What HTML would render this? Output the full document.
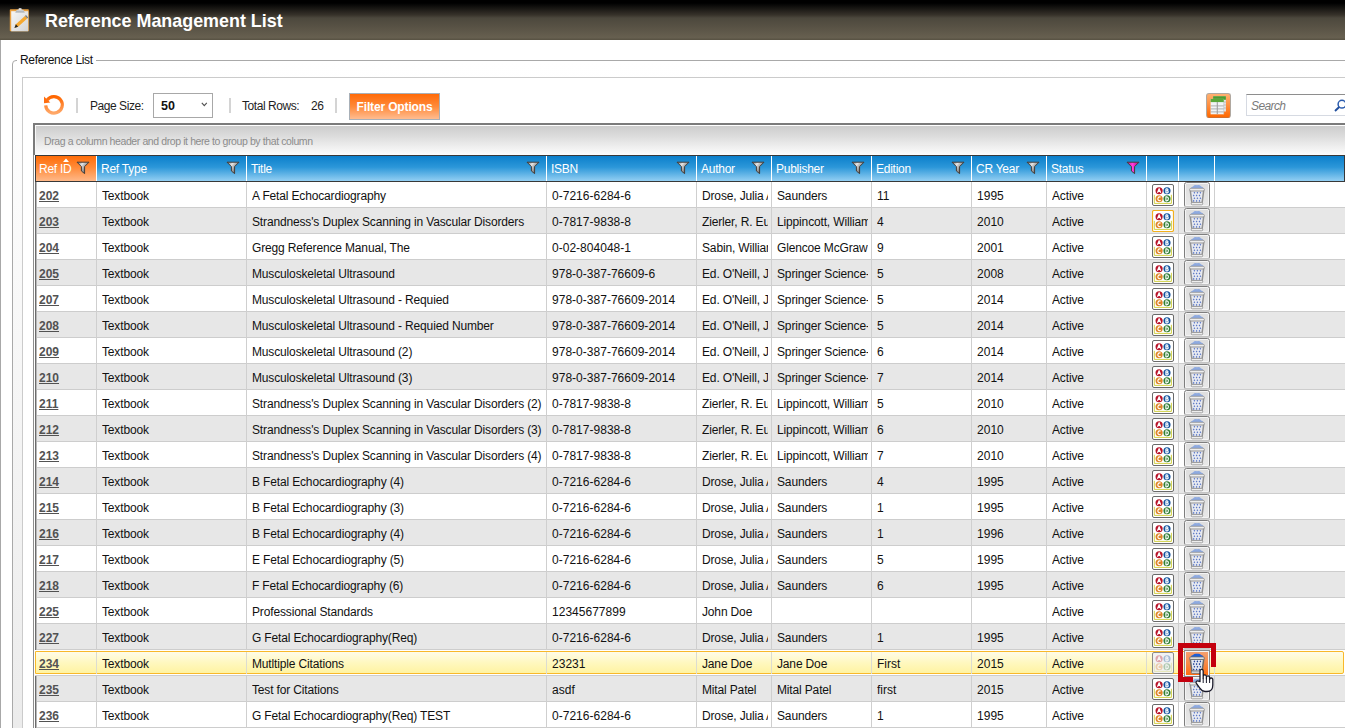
<!DOCTYPE html>
<html><head><meta charset="utf-8"><title>Reference Management List</title>
<style>
*{box-sizing:border-box}
html,body{margin:0;padding:0;width:1345px;height:728px;overflow:hidden;background:#fff;font-family:"Liberation Sans",sans-serif;position:relative}
.abs{position:absolute}
#topbar{position:absolute;left:0;top:0;width:1345px;height:40px;background:linear-gradient(to bottom,#000 0px,#000 3px,#1b1915 9px,#37322a 15px,#4c483d 18px,#575144 26px,#676050 38px,#5a5445 39px,#5a5445 40px)}
#title{position:absolute;left:45px;top:10px;font-size:17.9px;line-height:22px;font-weight:bold;color:#fff;white-space:nowrap}
#fs{position:absolute;left:12px;top:60px;width:1400px;height:800px;border:1px solid #a9a9a9;border-radius:4px;background:linear-gradient(to bottom,#ffffff 0%,#e8e8e8 100%)}
#legend{position:absolute;left:17px;top:53px;padding:0 3px;background:#fff;font-size:12px;line-height:14px;color:#111;letter-spacing:-0.33px;white-space:nowrap}
#inner{position:absolute;left:22px;top:77px;width:1400px;height:800px;border:1px solid #cbcbcb;background:#fff}
.txt{position:absolute;white-space:nowrap;font-size:12px;line-height:14px;color:#1e1e1e;letter-spacing:-0.45px}
.tsep{position:absolute;width:2px;height:15px;background:#d4d4d4}
#dd{position:absolute;left:153px;top:93px;width:60px;height:25px;border:1px solid #a8a8a8;background:#fff}
#ddv{position:absolute;left:7px;top:5px;font-size:12.5px;line-height:14px;font-weight:bold;color:#111}
#fbtn{position:absolute;left:349px;top:93px;width:91px;height:27px;border:1px solid #a8b0b8;background:linear-gradient(to bottom,#ff6a08 0%,#ff8a3a 50%,#ffbc90 100%);color:#fff;font-weight:bold;font-size:12px;line-height:27px;text-align:center;letter-spacing:-0.15px;white-space:nowrap}
#xbtn{position:absolute;left:1206px;top:93px;width:25px;height:25px;border-radius:3px;border:1px solid #b0a8a0;border-bottom-color:#d07030;background:linear-gradient(to bottom,#ffb070 0%,#ff8a38 55%,#ff6800 100%)}
#search{position:absolute;left:1246px;top:94px;width:120px;height:22px;border:1px solid #d6dae2;border-top-color:#8e8e8e;border-right:none;background:#fff}
#sph{position:absolute;left:4px;top:4px;font-size:12px;line-height:14px;font-style:italic;color:#7a7a7a;letter-spacing:-0.6px}
#grid{position:absolute;left:33px;top:123px;width:1400px;height:2px;background:#7b7b7b}
#gl1{position:absolute;left:33px;top:123px;width:2px;height:32px;background:#7b7b7b}
#gl2{position:absolute;left:33px;top:155px;width:1px;height:573px;background:#8e8e8e}
#grp{position:absolute;left:35px;top:125px;width:1310px;height:30px;background:linear-gradient(to bottom,#cdcdcd 0%,#dcdcdc 35%,#f3f3f3 80%,#fcfcfc 100%);border-top:1px solid #fff;border-left:1px solid #f8f8f8}
#grptx{position:absolute;left:8px;top:9px;font-size:10.5px;line-height:12px;color:#8c8c8c;letter-spacing:-0.4px;white-space:nowrap}
#hdr{position:absolute;left:35px;top:155px;width:1310px;height:27px;border-left:1px solid #3c3c3c;border-top:1px solid #383838;border-bottom:1px solid #383838;border-right:1px solid #383838;background:linear-gradient(to bottom,#0b7fcb 0%,#2c97d9 45%,#93cff3 100%)}
#hdr0{position:absolute;left:36px;top:156px;width:60px;height:25px;background:linear-gradient(to bottom,#ff6c08 0%,#ff8a38 45%,#ffb888 100%)}
.hsep{position:absolute;top:156px;width:1px;height:25px;background:#fff}
.htx{position:absolute;top:156px;height:25px;line-height:27px;font-size:12px;color:#fff;white-space:nowrap;letter-spacing:-0.25px}
.row{position:absolute;left:35px;width:1310px;height:26px;border-bottom:1px solid #cdcdcd;background:#fff}
.row.alt{background:#e7e7e7}
#hover{position:absolute;left:35px;width:1310px;height:26px;border-bottom:1px solid #cdcdcd;background:#fff}
#hover:after{content:"";position:absolute;left:0px;right:1px;top:1px;bottom:1px;border:1px solid #f8b82a;border-radius:0 2px 2px 0;background:linear-gradient(to bottom,#fffce8 0%,#fff8c0 50%,#fff3a2 100%)}
.vs{position:absolute;width:1px;background:#cfcfcf}
.vs2{position:absolute;width:1px;background:#dcdcd0}
.cell{position:absolute;height:25px;line-height:29px;font-size:12px;color:#111;white-space:nowrap;overflow:hidden;letter-spacing:-0.15px}
.rid{font-weight:bold;color:#525252;text-decoration:underline;letter-spacing:0}

.num{letter-spacing:0.02px}

</style></head><body>
<div id="topbar"></div>
<svg class="abs" style="left:9px;top:7px" width="22" height="26" viewBox="0 0 22 26">
<defs><linearGradient id="cbg" x1="0" y1="0" x2="1" y2="1"><stop offset="0" stop-color="#f6f6f6"/><stop offset="1" stop-color="#d4d4d4"/></linearGradient>
<linearGradient id="clp" x1="0" y1="0" x2="0" y2="1"><stop offset="0" stop-color="#ffffff"/><stop offset="1" stop-color="#9aa0a8"/></linearGradient></defs>
<rect x="0.8" y="2.3" width="19" height="22" rx="0.8" fill="#e8a040"/>
<rect x="2.2" y="4.2" width="17" height="20.1" fill="url(#cbg)"/>
<path d="M6.2 5.6 L7.8 2.8 L9.5 2.8 L9.8 1.2 L12.4 1.2 L12.7 2.8 L14.3 2.8 L15.8 5.6 Z" fill="url(#clp)"/>
<path d="M18.24 11.46 L15.96 8.94 L6.86 17.24 L5.6 20.7 L9.14 19.76 Z" fill="#f5a830"/>
<path d="M18.24 11.46 L15.96 8.94 L17 8 L19.2 10.5 Z" fill="#7a7a7a"/>
<path d="M6.86 17.24 L5.4 20.9 L9.14 19.76 Z" fill="#222"/>
</svg>
<div id="title">Reference Management List</div>
<div class="abs" style="left:0;top:40px;width:1px;height:688px;background:#a8a8a8"></div>
<div id="fs"></div><div id="legend">Reference List</div>
<div id="inner"></div>
<svg class="abs" style="left:43px;top:94px" width="22" height="22" viewBox="0 0 22 22">
<defs><linearGradient id="rfg" x1="0" y1="0" x2="0" y2="1"><stop offset="0" stop-color="#ff6600"/><stop offset="1" stop-color="#ffa868"/></linearGradient></defs>
<path d="M2.7 11.3 A8.3 8.3 0 1 0 4.1 6.2" fill="none" stroke="url(#rfg)" stroke-width="3.2"/>
<path d="M1 2.6 L1 9.3 L7.3 8.5 Z" fill="#ff6e10"/>
</svg>
<div class="tsep" style="left:76px;top:98px"></div>
<div class="txt" style="left:90px;top:99px">Page Size:</div>
<div id="dd"><span id="ddv">50</span><svg class="abs" style="left:47px;top:8px" width="7" height="5" viewBox="0 0 7 5"><path d="M0.8 0.8 L3.3 3.6 L5.8 0.8" fill="none" stroke="#505050" stroke-width="1.1"/></svg></div>
<div class="tsep" style="left:229px;top:98px"></div>
<div class="txt" style="left:242px;top:99px">Total Rows:</div>
<div class="txt" style="left:311px;top:99px">26</div>
<div class="tsep" style="left:335px;top:98px"></div>
<div id="fbtn">Filter Options</div>
<div id="xbtn"></div><svg class="abs" style="left:1206px;top:93px" width="25" height="25" viewBox="0 0 25 25">
<rect x="7.1" y="3.2" width="12.8" height="15.3" fill="#e4e8ec"/>
<rect x="7.1" y="3.2" width="12.8" height="3.6" fill="#4e9a30"/>
<path d="M7.1 9 H19.9 M7.1 12 H19.9 M7.1 15 H19.9" stroke="#b0b0b0" stroke-width="0.8"/>
<rect x="4.6" y="5.9" width="13.2" height="15.4" fill="#f2f4f6"/>
<rect x="4.6" y="5.9" width="13.2" height="3.2" fill="#5aa83a"/>
<path d="M4.6 12.9 H17.8 M4.6 15.9 H17.8 M4.6 18.9 H17.8" stroke="#a8a8a8" stroke-width="0.9"/>
<path d="M11.3 9.1 V21.3" stroke="#a0a0a0" stroke-width="1.1"/>
<path d="M17.8 9 V21.3" stroke="#b8b8b8" stroke-width="0.6"/>
</svg>
<div id="search"><span id="sph">Search</span><svg class="abs" style="left:86px;top:3px" width="14" height="14" viewBox="0 0 14 14"><circle cx="9" cy="6.2" r="3.9" fill="none" stroke="#2a5cae" stroke-width="1.5"/><path d="M6.2 9 L2 13" stroke="#22509e" stroke-width="1.9"/></svg></div>
<div id="grid"></div><div id="gl1"></div><div id="gl2"></div>
<div id="grp"><span id="grptx">Drag a column header and drop it here to group by that column</span></div>
<div class="row" style="top:182px"></div>
<div class="row alt" style="top:208px"></div>
<div class="row" style="top:234px"></div>
<div class="row alt" style="top:260px"></div>
<div class="row" style="top:286px"></div>
<div class="row alt" style="top:312px"></div>
<div class="row" style="top:338px"></div>
<div class="row alt" style="top:364px"></div>
<div class="row" style="top:390px"></div>
<div class="row alt" style="top:416px"></div>
<div class="row" style="top:442px"></div>
<div class="row alt" style="top:468px"></div>
<div class="row" style="top:494px"></div>
<div class="row alt" style="top:520px"></div>
<div class="row" style="top:546px"></div>
<div class="row alt" style="top:572px"></div>
<div class="row" style="top:598px"></div>
<div class="row alt" style="top:624px"></div>
<div class="row" style="top:650px"></div>
<div class="row alt" style="top:676px"></div>
<div class="row" style="top:702px"></div>
<div class="vs" style="left:96px;top:182px;height:546px"></div>
<div class="vs" style="left:246px;top:182px;height:546px"></div>
<div class="vs" style="left:546px;top:182px;height:546px"></div>
<div class="vs" style="left:696px;top:182px;height:546px"></div>
<div class="vs" style="left:771px;top:182px;height:546px"></div>
<div class="vs" style="left:871px;top:182px;height:546px"></div>
<div class="vs" style="left:971px;top:182px;height:546px"></div>
<div class="vs" style="left:1046px;top:182px;height:546px"></div>
<div class="vs" style="left:1146px;top:182px;height:546px"></div>
<div class="vs" style="left:1178px;top:182px;height:546px"></div>
<div class="vs" style="left:1214px;top:182px;height:546px"></div>
<div class="abs" style="left:35px;top:182px;width:1px;height:546px;background:#6c6c6c"></div><div class="abs" style="left:36px;top:182px;width:1px;height:546px;background:#b8b8b8"></div>
<div id="hover" style="top:650px"></div>
<div class="vs2" style="left:96px;top:652px;height:22px"></div>
<div class="vs2" style="left:246px;top:652px;height:22px"></div>
<div class="vs2" style="left:546px;top:652px;height:22px"></div>
<div class="vs2" style="left:696px;top:652px;height:22px"></div>
<div class="vs2" style="left:771px;top:652px;height:22px"></div>
<div class="vs2" style="left:871px;top:652px;height:22px"></div>
<div class="vs2" style="left:971px;top:652px;height:22px"></div>
<div class="vs2" style="left:1046px;top:652px;height:22px"></div>
<div class="vs2" style="left:1146px;top:652px;height:22px"></div>
<div class="vs2" style="left:1178px;top:652px;height:22px"></div>
<div class="vs2" style="left:1214px;top:652px;height:22px"></div>
<svg width="0" height="0" style="position:absolute"><defs>
<linearGradient id="tbg" x1="0" y1="0" x2="0" y2="1"><stop offset="0" stop-color="#dedede"/><stop offset="1" stop-color="#e8e8e8"/></linearGradient>
<linearGradient id="tbo" x1="0" y1="0" x2="0" y2="1"><stop offset="0" stop-color="#f4a070"/><stop offset="0.5" stop-color="#f88a48"/><stop offset="1" stop-color="#ff6c10"/></linearGradient>
</defs></svg>
<div class="cell rid" style="left:39px;top:182px;width:54px">202</div>
<div class="cell" style="left:102px;top:182px;width:141px">Textbook</div>
<div class="cell" style="left:252px;top:182px;width:291px">A Fetal Echocardiography</div>
<div class="cell num" style="left:552px;top:182px;width:141px">0-7216-6284-6</div>
<div class="cell" style="left:702px;top:182px;width:66px">Drose, Julia A</div>
<div class="cell" style="left:777px;top:182px;width:91px">Saunders</div>
<div class="cell num" style="left:877px;top:182px;width:91px">11</div>
<div class="cell num" style="left:977px;top:182px;width:66px">1995</div>
<div class="cell" style="left:1052px;top:182px;width:91px">Active</div>
<svg class="abs" style="left:1152px;top:184px" width="22" height="22" viewBox="0 0 22 22">
<rect x="0.5" y="0.5" width="21" height="21" rx="1.5" fill="#fff" stroke="#6a6a6a" stroke-width="1"/><g>
<path d="M2.3 10.8 V19.4 H19.4 V10.8" fill="none" stroke="#cccc30" stroke-width="0.9"/>
<circle cx="7.1" cy="6.8" r="3.55" fill="#b8142a"/><circle cx="15" cy="6.8" r="3.55" fill="#12539e"/>
<circle cx="7.1" cy="14.8" r="3.55" fill="#de8426"/><circle cx="15" cy="14.8" r="3.55" fill="#2f7d32"/>
<g fill="none" stroke="#fff" stroke-width="1.15" stroke-linejoin="round"><path d="M5.5 8.8 L7.1 4.6 L8.7 8.8 M6.1 7.5 H8.1"/><path d="M13.9 4.8 V8.8 H15.2 A1.05 1.05 0 0 0 15.2 6.7 H13.9 M13.9 4.8 H15 A0.95 0.95 0 0 1 15 6.7"/>
<path d="M8.6 13.3 A1.7 1.9 0 1 0 8.6 16.3"/><path d="M13.9 12.8 V16.8 H14.7 A1.7 2 0 0 0 14.7 12.8 Z"/></g>
</g></svg>
<svg class="abs" style="left:1184px;top:182px" width="26" height="25" viewBox="0 0 26 25">
<rect x="0.5" y="0.5" width="25" height="24.5" rx="2" fill="#f4f4f4" stroke="#7e7e7e" stroke-width="1"/>
<path d="M0.5 24.5 H25.5" stroke="#c4c4c4" stroke-width="1"/>
<rect x="2" y="2" width="22" height="21" fill="url(#tbg)"/>
<path d="M6.6 7 Q6.8 4.4 9 4.4 Q10.6 2.6 13 3.2 Q15.6 2.6 17.2 4.4 Q19.4 4.4 19.6 7 Z" fill="#8eaae0"/><path d="M6.3 8.6 L19.7 8.6 L18.1 20.8 L7.9 20.8 Z" fill="#e8eaf0" stroke="#929292" stroke-width="1.5"/><rect x="5.6" y="6.3" width="14.8" height="2.6" rx="1.3" fill="#eeeeee" stroke="#929292" stroke-width="0.8"/><g fill="#5a78c8"><path d="M10.40 9.75 L11.25 10.80 L10.40 11.85 L9.55 10.80 Z"/><path d="M13.40 9.75 L14.25 10.80 L13.40 11.85 L12.55 10.80 Z"/><path d="M16.40 9.75 L17.25 10.80 L16.40 11.85 L15.55 10.80 Z"/><path d="M9.70 12.45 L10.55 13.50 L9.70 14.55 L8.85 13.50 Z"/><path d="M12.60 12.45 L13.45 13.50 L12.60 14.55 L11.75 13.50 Z"/><path d="M15.50 12.45 L16.35 13.50 L15.50 14.55 L14.65 13.50 Z"/><path d="M10.40 15.15 L11.25 16.20 L10.40 17.25 L9.55 16.20 Z"/><path d="M13.40 15.15 L14.25 16.20 L13.40 17.25 L12.55 16.20 Z"/><path d="M16.40 15.15 L17.25 16.20 L16.40 17.25 L15.55 16.20 Z"/><path d="M9.70 17.85 L10.55 18.90 L9.70 19.95 L8.85 18.90 Z"/><path d="M12.60 17.85 L13.45 18.90 L12.60 19.95 L11.75 18.90 Z"/><path d="M15.50 17.85 L16.35 18.90 L15.50 19.95 L14.65 18.90 Z"/></g><rect x="7.3" y="20.4" width="11.4" height="2.4" rx="1" fill="#eeeeee" stroke="#929292" stroke-width="0.8"/>
</svg>
<div class="cell rid" style="left:39px;top:208px;width:54px">203</div>
<div class="cell" style="left:102px;top:208px;width:141px">Textbook</div>
<div class="cell" style="left:252px;top:208px;width:291px">Strandness's Duplex Scanning in Vascular Disorders</div>
<div class="cell num" style="left:552px;top:208px;width:141px">0-7817-9838-8</div>
<div class="cell" style="left:702px;top:208px;width:66px">Zierler, R. Eugene</div>
<div class="cell" style="left:777px;top:208px;width:91px">Lippincott, William</div>
<div class="cell num" style="left:877px;top:208px;width:91px">4</div>
<div class="cell num" style="left:977px;top:208px;width:66px">2010</div>
<div class="cell" style="left:1052px;top:208px;width:91px">Active</div>
<svg class="abs" style="left:1152px;top:210px" width="22" height="22" viewBox="0 0 22 22">
<rect x="0.5" y="0.5" width="21" height="21" rx="1.5" fill="#fff" stroke="#f2b01e" stroke-width="1.2"/><g>
<path d="M2.3 10.8 V19.4 H19.4 V10.8" fill="none" stroke="#cccc30" stroke-width="0.9"/>
<circle cx="7.1" cy="6.8" r="3.55" fill="#b8142a"/><circle cx="15" cy="6.8" r="3.55" fill="#12539e"/>
<circle cx="7.1" cy="14.8" r="3.55" fill="#de8426"/><circle cx="15" cy="14.8" r="3.55" fill="#2f7d32"/>
<g fill="none" stroke="#fff" stroke-width="1.15" stroke-linejoin="round"><path d="M5.5 8.8 L7.1 4.6 L8.7 8.8 M6.1 7.5 H8.1"/><path d="M13.9 4.8 V8.8 H15.2 A1.05 1.05 0 0 0 15.2 6.7 H13.9 M13.9 4.8 H15 A0.95 0.95 0 0 1 15 6.7"/>
<path d="M8.6 13.3 A1.7 1.9 0 1 0 8.6 16.3"/><path d="M13.9 12.8 V16.8 H14.7 A1.7 2 0 0 0 14.7 12.8 Z"/></g>
</g></svg>
<svg class="abs" style="left:1184px;top:208px" width="26" height="25" viewBox="0 0 26 25">
<rect x="0.5" y="0.5" width="25" height="24.5" rx="2" fill="#f4f4f4" stroke="#7e7e7e" stroke-width="1"/>
<path d="M0.5 24.5 H25.5" stroke="#c4c4c4" stroke-width="1"/>
<rect x="2" y="2" width="22" height="21" fill="url(#tbg)"/>
<path d="M6.6 7 Q6.8 4.4 9 4.4 Q10.6 2.6 13 3.2 Q15.6 2.6 17.2 4.4 Q19.4 4.4 19.6 7 Z" fill="#8eaae0"/><path d="M6.3 8.6 L19.7 8.6 L18.1 20.8 L7.9 20.8 Z" fill="#e8eaf0" stroke="#929292" stroke-width="1.5"/><rect x="5.6" y="6.3" width="14.8" height="2.6" rx="1.3" fill="#eeeeee" stroke="#929292" stroke-width="0.8"/><g fill="#5a78c8"><path d="M10.40 9.75 L11.25 10.80 L10.40 11.85 L9.55 10.80 Z"/><path d="M13.40 9.75 L14.25 10.80 L13.40 11.85 L12.55 10.80 Z"/><path d="M16.40 9.75 L17.25 10.80 L16.40 11.85 L15.55 10.80 Z"/><path d="M9.70 12.45 L10.55 13.50 L9.70 14.55 L8.85 13.50 Z"/><path d="M12.60 12.45 L13.45 13.50 L12.60 14.55 L11.75 13.50 Z"/><path d="M15.50 12.45 L16.35 13.50 L15.50 14.55 L14.65 13.50 Z"/><path d="M10.40 15.15 L11.25 16.20 L10.40 17.25 L9.55 16.20 Z"/><path d="M13.40 15.15 L14.25 16.20 L13.40 17.25 L12.55 16.20 Z"/><path d="M16.40 15.15 L17.25 16.20 L16.40 17.25 L15.55 16.20 Z"/><path d="M9.70 17.85 L10.55 18.90 L9.70 19.95 L8.85 18.90 Z"/><path d="M12.60 17.85 L13.45 18.90 L12.60 19.95 L11.75 18.90 Z"/><path d="M15.50 17.85 L16.35 18.90 L15.50 19.95 L14.65 18.90 Z"/></g><rect x="7.3" y="20.4" width="11.4" height="2.4" rx="1" fill="#eeeeee" stroke="#929292" stroke-width="0.8"/>
</svg>
<div class="cell rid" style="left:39px;top:234px;width:54px">204</div>
<div class="cell" style="left:102px;top:234px;width:141px">Textbook</div>
<div class="cell" style="left:252px;top:234px;width:291px">Gregg Reference Manual, The</div>
<div class="cell num" style="left:552px;top:234px;width:141px">0-02-804048-1</div>
<div class="cell" style="left:702px;top:234px;width:66px">Sabin, William</div>
<div class="cell" style="left:777px;top:234px;width:91px">Glencoe McGraw</div>
<div class="cell num" style="left:877px;top:234px;width:91px">9</div>
<div class="cell num" style="left:977px;top:234px;width:66px">2001</div>
<div class="cell" style="left:1052px;top:234px;width:91px">Active</div>
<svg class="abs" style="left:1152px;top:236px" width="22" height="22" viewBox="0 0 22 22">
<rect x="0.5" y="0.5" width="21" height="21" rx="1.5" fill="#fff" stroke="#6a6a6a" stroke-width="1"/><g>
<path d="M2.3 10.8 V19.4 H19.4 V10.8" fill="none" stroke="#cccc30" stroke-width="0.9"/>
<circle cx="7.1" cy="6.8" r="3.55" fill="#b8142a"/><circle cx="15" cy="6.8" r="3.55" fill="#12539e"/>
<circle cx="7.1" cy="14.8" r="3.55" fill="#de8426"/><circle cx="15" cy="14.8" r="3.55" fill="#2f7d32"/>
<g fill="none" stroke="#fff" stroke-width="1.15" stroke-linejoin="round"><path d="M5.5 8.8 L7.1 4.6 L8.7 8.8 M6.1 7.5 H8.1"/><path d="M13.9 4.8 V8.8 H15.2 A1.05 1.05 0 0 0 15.2 6.7 H13.9 M13.9 4.8 H15 A0.95 0.95 0 0 1 15 6.7"/>
<path d="M8.6 13.3 A1.7 1.9 0 1 0 8.6 16.3"/><path d="M13.9 12.8 V16.8 H14.7 A1.7 2 0 0 0 14.7 12.8 Z"/></g>
</g></svg>
<svg class="abs" style="left:1184px;top:234px" width="26" height="25" viewBox="0 0 26 25">
<rect x="0.5" y="0.5" width="25" height="24.5" rx="2" fill="#f4f4f4" stroke="#7e7e7e" stroke-width="1"/>
<path d="M0.5 24.5 H25.5" stroke="#c4c4c4" stroke-width="1"/>
<rect x="2" y="2" width="22" height="21" fill="url(#tbg)"/>
<path d="M6.6 7 Q6.8 4.4 9 4.4 Q10.6 2.6 13 3.2 Q15.6 2.6 17.2 4.4 Q19.4 4.4 19.6 7 Z" fill="#8eaae0"/><path d="M6.3 8.6 L19.7 8.6 L18.1 20.8 L7.9 20.8 Z" fill="#e8eaf0" stroke="#929292" stroke-width="1.5"/><rect x="5.6" y="6.3" width="14.8" height="2.6" rx="1.3" fill="#eeeeee" stroke="#929292" stroke-width="0.8"/><g fill="#5a78c8"><path d="M10.40 9.75 L11.25 10.80 L10.40 11.85 L9.55 10.80 Z"/><path d="M13.40 9.75 L14.25 10.80 L13.40 11.85 L12.55 10.80 Z"/><path d="M16.40 9.75 L17.25 10.80 L16.40 11.85 L15.55 10.80 Z"/><path d="M9.70 12.45 L10.55 13.50 L9.70 14.55 L8.85 13.50 Z"/><path d="M12.60 12.45 L13.45 13.50 L12.60 14.55 L11.75 13.50 Z"/><path d="M15.50 12.45 L16.35 13.50 L15.50 14.55 L14.65 13.50 Z"/><path d="M10.40 15.15 L11.25 16.20 L10.40 17.25 L9.55 16.20 Z"/><path d="M13.40 15.15 L14.25 16.20 L13.40 17.25 L12.55 16.20 Z"/><path d="M16.40 15.15 L17.25 16.20 L16.40 17.25 L15.55 16.20 Z"/><path d="M9.70 17.85 L10.55 18.90 L9.70 19.95 L8.85 18.90 Z"/><path d="M12.60 17.85 L13.45 18.90 L12.60 19.95 L11.75 18.90 Z"/><path d="M15.50 17.85 L16.35 18.90 L15.50 19.95 L14.65 18.90 Z"/></g><rect x="7.3" y="20.4" width="11.4" height="2.4" rx="1" fill="#eeeeee" stroke="#929292" stroke-width="0.8"/>
</svg>
<div class="cell rid" style="left:39px;top:260px;width:54px">205</div>
<div class="cell" style="left:102px;top:260px;width:141px">Textbook</div>
<div class="cell" style="left:252px;top:260px;width:291px">Musculoskeletal Ultrasound</div>
<div class="cell num" style="left:552px;top:260px;width:141px">978-0-387-76609-6</div>
<div class="cell" style="left:702px;top:260px;width:66px">Ed. O'Neill, J</div>
<div class="cell" style="left:777px;top:260px;width:91px">Springer Science-</div>
<div class="cell num" style="left:877px;top:260px;width:91px">5</div>
<div class="cell num" style="left:977px;top:260px;width:66px">2008</div>
<div class="cell" style="left:1052px;top:260px;width:91px">Active</div>
<svg class="abs" style="left:1152px;top:262px" width="22" height="22" viewBox="0 0 22 22">
<rect x="0.5" y="0.5" width="21" height="21" rx="1.5" fill="#fff" stroke="#6a6a6a" stroke-width="1"/><g>
<path d="M2.3 10.8 V19.4 H19.4 V10.8" fill="none" stroke="#cccc30" stroke-width="0.9"/>
<circle cx="7.1" cy="6.8" r="3.55" fill="#b8142a"/><circle cx="15" cy="6.8" r="3.55" fill="#12539e"/>
<circle cx="7.1" cy="14.8" r="3.55" fill="#de8426"/><circle cx="15" cy="14.8" r="3.55" fill="#2f7d32"/>
<g fill="none" stroke="#fff" stroke-width="1.15" stroke-linejoin="round"><path d="M5.5 8.8 L7.1 4.6 L8.7 8.8 M6.1 7.5 H8.1"/><path d="M13.9 4.8 V8.8 H15.2 A1.05 1.05 0 0 0 15.2 6.7 H13.9 M13.9 4.8 H15 A0.95 0.95 0 0 1 15 6.7"/>
<path d="M8.6 13.3 A1.7 1.9 0 1 0 8.6 16.3"/><path d="M13.9 12.8 V16.8 H14.7 A1.7 2 0 0 0 14.7 12.8 Z"/></g>
</g></svg>
<svg class="abs" style="left:1184px;top:260px" width="26" height="25" viewBox="0 0 26 25">
<rect x="0.5" y="0.5" width="25" height="24.5" rx="2" fill="#f4f4f4" stroke="#7e7e7e" stroke-width="1"/>
<path d="M0.5 24.5 H25.5" stroke="#c4c4c4" stroke-width="1"/>
<rect x="2" y="2" width="22" height="21" fill="url(#tbg)"/>
<path d="M6.6 7 Q6.8 4.4 9 4.4 Q10.6 2.6 13 3.2 Q15.6 2.6 17.2 4.4 Q19.4 4.4 19.6 7 Z" fill="#8eaae0"/><path d="M6.3 8.6 L19.7 8.6 L18.1 20.8 L7.9 20.8 Z" fill="#e8eaf0" stroke="#929292" stroke-width="1.5"/><rect x="5.6" y="6.3" width="14.8" height="2.6" rx="1.3" fill="#eeeeee" stroke="#929292" stroke-width="0.8"/><g fill="#5a78c8"><path d="M10.40 9.75 L11.25 10.80 L10.40 11.85 L9.55 10.80 Z"/><path d="M13.40 9.75 L14.25 10.80 L13.40 11.85 L12.55 10.80 Z"/><path d="M16.40 9.75 L17.25 10.80 L16.40 11.85 L15.55 10.80 Z"/><path d="M9.70 12.45 L10.55 13.50 L9.70 14.55 L8.85 13.50 Z"/><path d="M12.60 12.45 L13.45 13.50 L12.60 14.55 L11.75 13.50 Z"/><path d="M15.50 12.45 L16.35 13.50 L15.50 14.55 L14.65 13.50 Z"/><path d="M10.40 15.15 L11.25 16.20 L10.40 17.25 L9.55 16.20 Z"/><path d="M13.40 15.15 L14.25 16.20 L13.40 17.25 L12.55 16.20 Z"/><path d="M16.40 15.15 L17.25 16.20 L16.40 17.25 L15.55 16.20 Z"/><path d="M9.70 17.85 L10.55 18.90 L9.70 19.95 L8.85 18.90 Z"/><path d="M12.60 17.85 L13.45 18.90 L12.60 19.95 L11.75 18.90 Z"/><path d="M15.50 17.85 L16.35 18.90 L15.50 19.95 L14.65 18.90 Z"/></g><rect x="7.3" y="20.4" width="11.4" height="2.4" rx="1" fill="#eeeeee" stroke="#929292" stroke-width="0.8"/>
</svg>
<div class="cell rid" style="left:39px;top:286px;width:54px">207</div>
<div class="cell" style="left:102px;top:286px;width:141px">Textbook</div>
<div class="cell" style="left:252px;top:286px;width:291px">Musculoskeletal Ultrasound - Requied</div>
<div class="cell num" style="left:552px;top:286px;width:141px">978-0-387-76609-2014</div>
<div class="cell" style="left:702px;top:286px;width:66px">Ed. O'Neill, J</div>
<div class="cell" style="left:777px;top:286px;width:91px">Springer Science-</div>
<div class="cell num" style="left:877px;top:286px;width:91px">5</div>
<div class="cell num" style="left:977px;top:286px;width:66px">2014</div>
<div class="cell" style="left:1052px;top:286px;width:91px">Active</div>
<svg class="abs" style="left:1152px;top:288px" width="22" height="22" viewBox="0 0 22 22">
<rect x="0.5" y="0.5" width="21" height="21" rx="1.5" fill="#fff" stroke="#6a6a6a" stroke-width="1"/><g>
<path d="M2.3 10.8 V19.4 H19.4 V10.8" fill="none" stroke="#cccc30" stroke-width="0.9"/>
<circle cx="7.1" cy="6.8" r="3.55" fill="#b8142a"/><circle cx="15" cy="6.8" r="3.55" fill="#12539e"/>
<circle cx="7.1" cy="14.8" r="3.55" fill="#de8426"/><circle cx="15" cy="14.8" r="3.55" fill="#2f7d32"/>
<g fill="none" stroke="#fff" stroke-width="1.15" stroke-linejoin="round"><path d="M5.5 8.8 L7.1 4.6 L8.7 8.8 M6.1 7.5 H8.1"/><path d="M13.9 4.8 V8.8 H15.2 A1.05 1.05 0 0 0 15.2 6.7 H13.9 M13.9 4.8 H15 A0.95 0.95 0 0 1 15 6.7"/>
<path d="M8.6 13.3 A1.7 1.9 0 1 0 8.6 16.3"/><path d="M13.9 12.8 V16.8 H14.7 A1.7 2 0 0 0 14.7 12.8 Z"/></g>
</g></svg>
<svg class="abs" style="left:1184px;top:286px" width="26" height="25" viewBox="0 0 26 25">
<rect x="0.5" y="0.5" width="25" height="24.5" rx="2" fill="#f4f4f4" stroke="#7e7e7e" stroke-width="1"/>
<path d="M0.5 24.5 H25.5" stroke="#c4c4c4" stroke-width="1"/>
<rect x="2" y="2" width="22" height="21" fill="url(#tbg)"/>
<path d="M6.6 7 Q6.8 4.4 9 4.4 Q10.6 2.6 13 3.2 Q15.6 2.6 17.2 4.4 Q19.4 4.4 19.6 7 Z" fill="#8eaae0"/><path d="M6.3 8.6 L19.7 8.6 L18.1 20.8 L7.9 20.8 Z" fill="#e8eaf0" stroke="#929292" stroke-width="1.5"/><rect x="5.6" y="6.3" width="14.8" height="2.6" rx="1.3" fill="#eeeeee" stroke="#929292" stroke-width="0.8"/><g fill="#5a78c8"><path d="M10.40 9.75 L11.25 10.80 L10.40 11.85 L9.55 10.80 Z"/><path d="M13.40 9.75 L14.25 10.80 L13.40 11.85 L12.55 10.80 Z"/><path d="M16.40 9.75 L17.25 10.80 L16.40 11.85 L15.55 10.80 Z"/><path d="M9.70 12.45 L10.55 13.50 L9.70 14.55 L8.85 13.50 Z"/><path d="M12.60 12.45 L13.45 13.50 L12.60 14.55 L11.75 13.50 Z"/><path d="M15.50 12.45 L16.35 13.50 L15.50 14.55 L14.65 13.50 Z"/><path d="M10.40 15.15 L11.25 16.20 L10.40 17.25 L9.55 16.20 Z"/><path d="M13.40 15.15 L14.25 16.20 L13.40 17.25 L12.55 16.20 Z"/><path d="M16.40 15.15 L17.25 16.20 L16.40 17.25 L15.55 16.20 Z"/><path d="M9.70 17.85 L10.55 18.90 L9.70 19.95 L8.85 18.90 Z"/><path d="M12.60 17.85 L13.45 18.90 L12.60 19.95 L11.75 18.90 Z"/><path d="M15.50 17.85 L16.35 18.90 L15.50 19.95 L14.65 18.90 Z"/></g><rect x="7.3" y="20.4" width="11.4" height="2.4" rx="1" fill="#eeeeee" stroke="#929292" stroke-width="0.8"/>
</svg>
<div class="cell rid" style="left:39px;top:312px;width:54px">208</div>
<div class="cell" style="left:102px;top:312px;width:141px">Textbook</div>
<div class="cell" style="left:252px;top:312px;width:291px">Musculoskeletal Ultrasound - Requied Number</div>
<div class="cell num" style="left:552px;top:312px;width:141px">978-0-387-76609-2014</div>
<div class="cell" style="left:702px;top:312px;width:66px">Ed. O'Neill, J</div>
<div class="cell" style="left:777px;top:312px;width:91px">Springer Science-</div>
<div class="cell num" style="left:877px;top:312px;width:91px">5</div>
<div class="cell num" style="left:977px;top:312px;width:66px">2014</div>
<div class="cell" style="left:1052px;top:312px;width:91px">Active</div>
<svg class="abs" style="left:1152px;top:314px" width="22" height="22" viewBox="0 0 22 22">
<rect x="0.5" y="0.5" width="21" height="21" rx="1.5" fill="#fff" stroke="#6a6a6a" stroke-width="1"/><g>
<path d="M2.3 10.8 V19.4 H19.4 V10.8" fill="none" stroke="#cccc30" stroke-width="0.9"/>
<circle cx="7.1" cy="6.8" r="3.55" fill="#b8142a"/><circle cx="15" cy="6.8" r="3.55" fill="#12539e"/>
<circle cx="7.1" cy="14.8" r="3.55" fill="#de8426"/><circle cx="15" cy="14.8" r="3.55" fill="#2f7d32"/>
<g fill="none" stroke="#fff" stroke-width="1.15" stroke-linejoin="round"><path d="M5.5 8.8 L7.1 4.6 L8.7 8.8 M6.1 7.5 H8.1"/><path d="M13.9 4.8 V8.8 H15.2 A1.05 1.05 0 0 0 15.2 6.7 H13.9 M13.9 4.8 H15 A0.95 0.95 0 0 1 15 6.7"/>
<path d="M8.6 13.3 A1.7 1.9 0 1 0 8.6 16.3"/><path d="M13.9 12.8 V16.8 H14.7 A1.7 2 0 0 0 14.7 12.8 Z"/></g>
</g></svg>
<svg class="abs" style="left:1184px;top:312px" width="26" height="25" viewBox="0 0 26 25">
<rect x="0.5" y="0.5" width="25" height="24.5" rx="2" fill="#f4f4f4" stroke="#7e7e7e" stroke-width="1"/>
<path d="M0.5 24.5 H25.5" stroke="#c4c4c4" stroke-width="1"/>
<rect x="2" y="2" width="22" height="21" fill="url(#tbg)"/>
<path d="M6.6 7 Q6.8 4.4 9 4.4 Q10.6 2.6 13 3.2 Q15.6 2.6 17.2 4.4 Q19.4 4.4 19.6 7 Z" fill="#8eaae0"/><path d="M6.3 8.6 L19.7 8.6 L18.1 20.8 L7.9 20.8 Z" fill="#e8eaf0" stroke="#929292" stroke-width="1.5"/><rect x="5.6" y="6.3" width="14.8" height="2.6" rx="1.3" fill="#eeeeee" stroke="#929292" stroke-width="0.8"/><g fill="#5a78c8"><path d="M10.40 9.75 L11.25 10.80 L10.40 11.85 L9.55 10.80 Z"/><path d="M13.40 9.75 L14.25 10.80 L13.40 11.85 L12.55 10.80 Z"/><path d="M16.40 9.75 L17.25 10.80 L16.40 11.85 L15.55 10.80 Z"/><path d="M9.70 12.45 L10.55 13.50 L9.70 14.55 L8.85 13.50 Z"/><path d="M12.60 12.45 L13.45 13.50 L12.60 14.55 L11.75 13.50 Z"/><path d="M15.50 12.45 L16.35 13.50 L15.50 14.55 L14.65 13.50 Z"/><path d="M10.40 15.15 L11.25 16.20 L10.40 17.25 L9.55 16.20 Z"/><path d="M13.40 15.15 L14.25 16.20 L13.40 17.25 L12.55 16.20 Z"/><path d="M16.40 15.15 L17.25 16.20 L16.40 17.25 L15.55 16.20 Z"/><path d="M9.70 17.85 L10.55 18.90 L9.70 19.95 L8.85 18.90 Z"/><path d="M12.60 17.85 L13.45 18.90 L12.60 19.95 L11.75 18.90 Z"/><path d="M15.50 17.85 L16.35 18.90 L15.50 19.95 L14.65 18.90 Z"/></g><rect x="7.3" y="20.4" width="11.4" height="2.4" rx="1" fill="#eeeeee" stroke="#929292" stroke-width="0.8"/>
</svg>
<div class="cell rid" style="left:39px;top:338px;width:54px">209</div>
<div class="cell" style="left:102px;top:338px;width:141px">Textbook</div>
<div class="cell" style="left:252px;top:338px;width:291px">Musculoskeletal Ultrasound (2)</div>
<div class="cell num" style="left:552px;top:338px;width:141px">978-0-387-76609-2014</div>
<div class="cell" style="left:702px;top:338px;width:66px">Ed. O'Neill, J</div>
<div class="cell" style="left:777px;top:338px;width:91px">Springer Science-</div>
<div class="cell num" style="left:877px;top:338px;width:91px">6</div>
<div class="cell num" style="left:977px;top:338px;width:66px">2014</div>
<div class="cell" style="left:1052px;top:338px;width:91px">Active</div>
<svg class="abs" style="left:1152px;top:340px" width="22" height="22" viewBox="0 0 22 22">
<rect x="0.5" y="0.5" width="21" height="21" rx="1.5" fill="#fff" stroke="#6a6a6a" stroke-width="1"/><g>
<path d="M2.3 10.8 V19.4 H19.4 V10.8" fill="none" stroke="#cccc30" stroke-width="0.9"/>
<circle cx="7.1" cy="6.8" r="3.55" fill="#b8142a"/><circle cx="15" cy="6.8" r="3.55" fill="#12539e"/>
<circle cx="7.1" cy="14.8" r="3.55" fill="#de8426"/><circle cx="15" cy="14.8" r="3.55" fill="#2f7d32"/>
<g fill="none" stroke="#fff" stroke-width="1.15" stroke-linejoin="round"><path d="M5.5 8.8 L7.1 4.6 L8.7 8.8 M6.1 7.5 H8.1"/><path d="M13.9 4.8 V8.8 H15.2 A1.05 1.05 0 0 0 15.2 6.7 H13.9 M13.9 4.8 H15 A0.95 0.95 0 0 1 15 6.7"/>
<path d="M8.6 13.3 A1.7 1.9 0 1 0 8.6 16.3"/><path d="M13.9 12.8 V16.8 H14.7 A1.7 2 0 0 0 14.7 12.8 Z"/></g>
</g></svg>
<svg class="abs" style="left:1184px;top:338px" width="26" height="25" viewBox="0 0 26 25">
<rect x="0.5" y="0.5" width="25" height="24.5" rx="2" fill="#f4f4f4" stroke="#7e7e7e" stroke-width="1"/>
<path d="M0.5 24.5 H25.5" stroke="#c4c4c4" stroke-width="1"/>
<rect x="2" y="2" width="22" height="21" fill="url(#tbg)"/>
<path d="M6.6 7 Q6.8 4.4 9 4.4 Q10.6 2.6 13 3.2 Q15.6 2.6 17.2 4.4 Q19.4 4.4 19.6 7 Z" fill="#8eaae0"/><path d="M6.3 8.6 L19.7 8.6 L18.1 20.8 L7.9 20.8 Z" fill="#e8eaf0" stroke="#929292" stroke-width="1.5"/><rect x="5.6" y="6.3" width="14.8" height="2.6" rx="1.3" fill="#eeeeee" stroke="#929292" stroke-width="0.8"/><g fill="#5a78c8"><path d="M10.40 9.75 L11.25 10.80 L10.40 11.85 L9.55 10.80 Z"/><path d="M13.40 9.75 L14.25 10.80 L13.40 11.85 L12.55 10.80 Z"/><path d="M16.40 9.75 L17.25 10.80 L16.40 11.85 L15.55 10.80 Z"/><path d="M9.70 12.45 L10.55 13.50 L9.70 14.55 L8.85 13.50 Z"/><path d="M12.60 12.45 L13.45 13.50 L12.60 14.55 L11.75 13.50 Z"/><path d="M15.50 12.45 L16.35 13.50 L15.50 14.55 L14.65 13.50 Z"/><path d="M10.40 15.15 L11.25 16.20 L10.40 17.25 L9.55 16.20 Z"/><path d="M13.40 15.15 L14.25 16.20 L13.40 17.25 L12.55 16.20 Z"/><path d="M16.40 15.15 L17.25 16.20 L16.40 17.25 L15.55 16.20 Z"/><path d="M9.70 17.85 L10.55 18.90 L9.70 19.95 L8.85 18.90 Z"/><path d="M12.60 17.85 L13.45 18.90 L12.60 19.95 L11.75 18.90 Z"/><path d="M15.50 17.85 L16.35 18.90 L15.50 19.95 L14.65 18.90 Z"/></g><rect x="7.3" y="20.4" width="11.4" height="2.4" rx="1" fill="#eeeeee" stroke="#929292" stroke-width="0.8"/>
</svg>
<div class="cell rid" style="left:39px;top:364px;width:54px">210</div>
<div class="cell" style="left:102px;top:364px;width:141px">Textbook</div>
<div class="cell" style="left:252px;top:364px;width:291px">Musculoskeletal Ultrasound (3)</div>
<div class="cell num" style="left:552px;top:364px;width:141px">978-0-387-76609-2014</div>
<div class="cell" style="left:702px;top:364px;width:66px">Ed. O'Neill, J</div>
<div class="cell" style="left:777px;top:364px;width:91px">Springer Science-</div>
<div class="cell num" style="left:877px;top:364px;width:91px">7</div>
<div class="cell num" style="left:977px;top:364px;width:66px">2014</div>
<div class="cell" style="left:1052px;top:364px;width:91px">Active</div>
<svg class="abs" style="left:1152px;top:366px" width="22" height="22" viewBox="0 0 22 22">
<rect x="0.5" y="0.5" width="21" height="21" rx="1.5" fill="#fff" stroke="#6a6a6a" stroke-width="1"/><g>
<path d="M2.3 10.8 V19.4 H19.4 V10.8" fill="none" stroke="#cccc30" stroke-width="0.9"/>
<circle cx="7.1" cy="6.8" r="3.55" fill="#b8142a"/><circle cx="15" cy="6.8" r="3.55" fill="#12539e"/>
<circle cx="7.1" cy="14.8" r="3.55" fill="#de8426"/><circle cx="15" cy="14.8" r="3.55" fill="#2f7d32"/>
<g fill="none" stroke="#fff" stroke-width="1.15" stroke-linejoin="round"><path d="M5.5 8.8 L7.1 4.6 L8.7 8.8 M6.1 7.5 H8.1"/><path d="M13.9 4.8 V8.8 H15.2 A1.05 1.05 0 0 0 15.2 6.7 H13.9 M13.9 4.8 H15 A0.95 0.95 0 0 1 15 6.7"/>
<path d="M8.6 13.3 A1.7 1.9 0 1 0 8.6 16.3"/><path d="M13.9 12.8 V16.8 H14.7 A1.7 2 0 0 0 14.7 12.8 Z"/></g>
</g></svg>
<svg class="abs" style="left:1184px;top:364px" width="26" height="25" viewBox="0 0 26 25">
<rect x="0.5" y="0.5" width="25" height="24.5" rx="2" fill="#f4f4f4" stroke="#7e7e7e" stroke-width="1"/>
<path d="M0.5 24.5 H25.5" stroke="#c4c4c4" stroke-width="1"/>
<rect x="2" y="2" width="22" height="21" fill="url(#tbg)"/>
<path d="M6.6 7 Q6.8 4.4 9 4.4 Q10.6 2.6 13 3.2 Q15.6 2.6 17.2 4.4 Q19.4 4.4 19.6 7 Z" fill="#8eaae0"/><path d="M6.3 8.6 L19.7 8.6 L18.1 20.8 L7.9 20.8 Z" fill="#e8eaf0" stroke="#929292" stroke-width="1.5"/><rect x="5.6" y="6.3" width="14.8" height="2.6" rx="1.3" fill="#eeeeee" stroke="#929292" stroke-width="0.8"/><g fill="#5a78c8"><path d="M10.40 9.75 L11.25 10.80 L10.40 11.85 L9.55 10.80 Z"/><path d="M13.40 9.75 L14.25 10.80 L13.40 11.85 L12.55 10.80 Z"/><path d="M16.40 9.75 L17.25 10.80 L16.40 11.85 L15.55 10.80 Z"/><path d="M9.70 12.45 L10.55 13.50 L9.70 14.55 L8.85 13.50 Z"/><path d="M12.60 12.45 L13.45 13.50 L12.60 14.55 L11.75 13.50 Z"/><path d="M15.50 12.45 L16.35 13.50 L15.50 14.55 L14.65 13.50 Z"/><path d="M10.40 15.15 L11.25 16.20 L10.40 17.25 L9.55 16.20 Z"/><path d="M13.40 15.15 L14.25 16.20 L13.40 17.25 L12.55 16.20 Z"/><path d="M16.40 15.15 L17.25 16.20 L16.40 17.25 L15.55 16.20 Z"/><path d="M9.70 17.85 L10.55 18.90 L9.70 19.95 L8.85 18.90 Z"/><path d="M12.60 17.85 L13.45 18.90 L12.60 19.95 L11.75 18.90 Z"/><path d="M15.50 17.85 L16.35 18.90 L15.50 19.95 L14.65 18.90 Z"/></g><rect x="7.3" y="20.4" width="11.4" height="2.4" rx="1" fill="#eeeeee" stroke="#929292" stroke-width="0.8"/>
</svg>
<div class="cell rid" style="left:39px;top:390px;width:54px">211</div>
<div class="cell" style="left:102px;top:390px;width:141px">Textbook</div>
<div class="cell" style="left:252px;top:390px;width:291px">Strandness's Duplex Scanning in Vascular Disorders (2)</div>
<div class="cell num" style="left:552px;top:390px;width:141px">0-7817-9838-8</div>
<div class="cell" style="left:702px;top:390px;width:66px">Zierler, R. Eugene</div>
<div class="cell" style="left:777px;top:390px;width:91px">Lippincott, William</div>
<div class="cell num" style="left:877px;top:390px;width:91px">5</div>
<div class="cell num" style="left:977px;top:390px;width:66px">2010</div>
<div class="cell" style="left:1052px;top:390px;width:91px">Active</div>
<svg class="abs" style="left:1152px;top:392px" width="22" height="22" viewBox="0 0 22 22">
<rect x="0.5" y="0.5" width="21" height="21" rx="1.5" fill="#fff" stroke="#6a6a6a" stroke-width="1"/><g>
<path d="M2.3 10.8 V19.4 H19.4 V10.8" fill="none" stroke="#cccc30" stroke-width="0.9"/>
<circle cx="7.1" cy="6.8" r="3.55" fill="#b8142a"/><circle cx="15" cy="6.8" r="3.55" fill="#12539e"/>
<circle cx="7.1" cy="14.8" r="3.55" fill="#de8426"/><circle cx="15" cy="14.8" r="3.55" fill="#2f7d32"/>
<g fill="none" stroke="#fff" stroke-width="1.15" stroke-linejoin="round"><path d="M5.5 8.8 L7.1 4.6 L8.7 8.8 M6.1 7.5 H8.1"/><path d="M13.9 4.8 V8.8 H15.2 A1.05 1.05 0 0 0 15.2 6.7 H13.9 M13.9 4.8 H15 A0.95 0.95 0 0 1 15 6.7"/>
<path d="M8.6 13.3 A1.7 1.9 0 1 0 8.6 16.3"/><path d="M13.9 12.8 V16.8 H14.7 A1.7 2 0 0 0 14.7 12.8 Z"/></g>
</g></svg>
<svg class="abs" style="left:1184px;top:390px" width="26" height="25" viewBox="0 0 26 25">
<rect x="0.5" y="0.5" width="25" height="24.5" rx="2" fill="#f4f4f4" stroke="#7e7e7e" stroke-width="1"/>
<path d="M0.5 24.5 H25.5" stroke="#c4c4c4" stroke-width="1"/>
<rect x="2" y="2" width="22" height="21" fill="url(#tbg)"/>
<path d="M6.6 7 Q6.8 4.4 9 4.4 Q10.6 2.6 13 3.2 Q15.6 2.6 17.2 4.4 Q19.4 4.4 19.6 7 Z" fill="#8eaae0"/><path d="M6.3 8.6 L19.7 8.6 L18.1 20.8 L7.9 20.8 Z" fill="#e8eaf0" stroke="#929292" stroke-width="1.5"/><rect x="5.6" y="6.3" width="14.8" height="2.6" rx="1.3" fill="#eeeeee" stroke="#929292" stroke-width="0.8"/><g fill="#5a78c8"><path d="M10.40 9.75 L11.25 10.80 L10.40 11.85 L9.55 10.80 Z"/><path d="M13.40 9.75 L14.25 10.80 L13.40 11.85 L12.55 10.80 Z"/><path d="M16.40 9.75 L17.25 10.80 L16.40 11.85 L15.55 10.80 Z"/><path d="M9.70 12.45 L10.55 13.50 L9.70 14.55 L8.85 13.50 Z"/><path d="M12.60 12.45 L13.45 13.50 L12.60 14.55 L11.75 13.50 Z"/><path d="M15.50 12.45 L16.35 13.50 L15.50 14.55 L14.65 13.50 Z"/><path d="M10.40 15.15 L11.25 16.20 L10.40 17.25 L9.55 16.20 Z"/><path d="M13.40 15.15 L14.25 16.20 L13.40 17.25 L12.55 16.20 Z"/><path d="M16.40 15.15 L17.25 16.20 L16.40 17.25 L15.55 16.20 Z"/><path d="M9.70 17.85 L10.55 18.90 L9.70 19.95 L8.85 18.90 Z"/><path d="M12.60 17.85 L13.45 18.90 L12.60 19.95 L11.75 18.90 Z"/><path d="M15.50 17.85 L16.35 18.90 L15.50 19.95 L14.65 18.90 Z"/></g><rect x="7.3" y="20.4" width="11.4" height="2.4" rx="1" fill="#eeeeee" stroke="#929292" stroke-width="0.8"/>
</svg>
<div class="cell rid" style="left:39px;top:416px;width:54px">212</div>
<div class="cell" style="left:102px;top:416px;width:141px">Textbook</div>
<div class="cell" style="left:252px;top:416px;width:291px">Strandness's Duplex Scanning in Vascular Disorders (3)</div>
<div class="cell num" style="left:552px;top:416px;width:141px">0-7817-9838-8</div>
<div class="cell" style="left:702px;top:416px;width:66px">Zierler, R. Eugene</div>
<div class="cell" style="left:777px;top:416px;width:91px">Lippincott, William</div>
<div class="cell num" style="left:877px;top:416px;width:91px">6</div>
<div class="cell num" style="left:977px;top:416px;width:66px">2010</div>
<div class="cell" style="left:1052px;top:416px;width:91px">Active</div>
<svg class="abs" style="left:1152px;top:418px" width="22" height="22" viewBox="0 0 22 22">
<rect x="0.5" y="0.5" width="21" height="21" rx="1.5" fill="#fff" stroke="#6a6a6a" stroke-width="1"/><g>
<path d="M2.3 10.8 V19.4 H19.4 V10.8" fill="none" stroke="#cccc30" stroke-width="0.9"/>
<circle cx="7.1" cy="6.8" r="3.55" fill="#b8142a"/><circle cx="15" cy="6.8" r="3.55" fill="#12539e"/>
<circle cx="7.1" cy="14.8" r="3.55" fill="#de8426"/><circle cx="15" cy="14.8" r="3.55" fill="#2f7d32"/>
<g fill="none" stroke="#fff" stroke-width="1.15" stroke-linejoin="round"><path d="M5.5 8.8 L7.1 4.6 L8.7 8.8 M6.1 7.5 H8.1"/><path d="M13.9 4.8 V8.8 H15.2 A1.05 1.05 0 0 0 15.2 6.7 H13.9 M13.9 4.8 H15 A0.95 0.95 0 0 1 15 6.7"/>
<path d="M8.6 13.3 A1.7 1.9 0 1 0 8.6 16.3"/><path d="M13.9 12.8 V16.8 H14.7 A1.7 2 0 0 0 14.7 12.8 Z"/></g>
</g></svg>
<svg class="abs" style="left:1184px;top:416px" width="26" height="25" viewBox="0 0 26 25">
<rect x="0.5" y="0.5" width="25" height="24.5" rx="2" fill="#f4f4f4" stroke="#7e7e7e" stroke-width="1"/>
<path d="M0.5 24.5 H25.5" stroke="#c4c4c4" stroke-width="1"/>
<rect x="2" y="2" width="22" height="21" fill="url(#tbg)"/>
<path d="M6.6 7 Q6.8 4.4 9 4.4 Q10.6 2.6 13 3.2 Q15.6 2.6 17.2 4.4 Q19.4 4.4 19.6 7 Z" fill="#8eaae0"/><path d="M6.3 8.6 L19.7 8.6 L18.1 20.8 L7.9 20.8 Z" fill="#e8eaf0" stroke="#929292" stroke-width="1.5"/><rect x="5.6" y="6.3" width="14.8" height="2.6" rx="1.3" fill="#eeeeee" stroke="#929292" stroke-width="0.8"/><g fill="#5a78c8"><path d="M10.40 9.75 L11.25 10.80 L10.40 11.85 L9.55 10.80 Z"/><path d="M13.40 9.75 L14.25 10.80 L13.40 11.85 L12.55 10.80 Z"/><path d="M16.40 9.75 L17.25 10.80 L16.40 11.85 L15.55 10.80 Z"/><path d="M9.70 12.45 L10.55 13.50 L9.70 14.55 L8.85 13.50 Z"/><path d="M12.60 12.45 L13.45 13.50 L12.60 14.55 L11.75 13.50 Z"/><path d="M15.50 12.45 L16.35 13.50 L15.50 14.55 L14.65 13.50 Z"/><path d="M10.40 15.15 L11.25 16.20 L10.40 17.25 L9.55 16.20 Z"/><path d="M13.40 15.15 L14.25 16.20 L13.40 17.25 L12.55 16.20 Z"/><path d="M16.40 15.15 L17.25 16.20 L16.40 17.25 L15.55 16.20 Z"/><path d="M9.70 17.85 L10.55 18.90 L9.70 19.95 L8.85 18.90 Z"/><path d="M12.60 17.85 L13.45 18.90 L12.60 19.95 L11.75 18.90 Z"/><path d="M15.50 17.85 L16.35 18.90 L15.50 19.95 L14.65 18.90 Z"/></g><rect x="7.3" y="20.4" width="11.4" height="2.4" rx="1" fill="#eeeeee" stroke="#929292" stroke-width="0.8"/>
</svg>
<div class="cell rid" style="left:39px;top:442px;width:54px">213</div>
<div class="cell" style="left:102px;top:442px;width:141px">Textbook</div>
<div class="cell" style="left:252px;top:442px;width:291px">Strandness's Duplex Scanning in Vascular Disorders (4)</div>
<div class="cell num" style="left:552px;top:442px;width:141px">0-7817-9838-8</div>
<div class="cell" style="left:702px;top:442px;width:66px">Zierler, R. Eugene</div>
<div class="cell" style="left:777px;top:442px;width:91px">Lippincott, William</div>
<div class="cell num" style="left:877px;top:442px;width:91px">7</div>
<div class="cell num" style="left:977px;top:442px;width:66px">2010</div>
<div class="cell" style="left:1052px;top:442px;width:91px">Active</div>
<svg class="abs" style="left:1152px;top:444px" width="22" height="22" viewBox="0 0 22 22">
<rect x="0.5" y="0.5" width="21" height="21" rx="1.5" fill="#fff" stroke="#6a6a6a" stroke-width="1"/><g>
<path d="M2.3 10.8 V19.4 H19.4 V10.8" fill="none" stroke="#cccc30" stroke-width="0.9"/>
<circle cx="7.1" cy="6.8" r="3.55" fill="#b8142a"/><circle cx="15" cy="6.8" r="3.55" fill="#12539e"/>
<circle cx="7.1" cy="14.8" r="3.55" fill="#de8426"/><circle cx="15" cy="14.8" r="3.55" fill="#2f7d32"/>
<g fill="none" stroke="#fff" stroke-width="1.15" stroke-linejoin="round"><path d="M5.5 8.8 L7.1 4.6 L8.7 8.8 M6.1 7.5 H8.1"/><path d="M13.9 4.8 V8.8 H15.2 A1.05 1.05 0 0 0 15.2 6.7 H13.9 M13.9 4.8 H15 A0.95 0.95 0 0 1 15 6.7"/>
<path d="M8.6 13.3 A1.7 1.9 0 1 0 8.6 16.3"/><path d="M13.9 12.8 V16.8 H14.7 A1.7 2 0 0 0 14.7 12.8 Z"/></g>
</g></svg>
<svg class="abs" style="left:1184px;top:442px" width="26" height="25" viewBox="0 0 26 25">
<rect x="0.5" y="0.5" width="25" height="24.5" rx="2" fill="#f4f4f4" stroke="#7e7e7e" stroke-width="1"/>
<path d="M0.5 24.5 H25.5" stroke="#c4c4c4" stroke-width="1"/>
<rect x="2" y="2" width="22" height="21" fill="url(#tbg)"/>
<path d="M6.6 7 Q6.8 4.4 9 4.4 Q10.6 2.6 13 3.2 Q15.6 2.6 17.2 4.4 Q19.4 4.4 19.6 7 Z" fill="#8eaae0"/><path d="M6.3 8.6 L19.7 8.6 L18.1 20.8 L7.9 20.8 Z" fill="#e8eaf0" stroke="#929292" stroke-width="1.5"/><rect x="5.6" y="6.3" width="14.8" height="2.6" rx="1.3" fill="#eeeeee" stroke="#929292" stroke-width="0.8"/><g fill="#5a78c8"><path d="M10.40 9.75 L11.25 10.80 L10.40 11.85 L9.55 10.80 Z"/><path d="M13.40 9.75 L14.25 10.80 L13.40 11.85 L12.55 10.80 Z"/><path d="M16.40 9.75 L17.25 10.80 L16.40 11.85 L15.55 10.80 Z"/><path d="M9.70 12.45 L10.55 13.50 L9.70 14.55 L8.85 13.50 Z"/><path d="M12.60 12.45 L13.45 13.50 L12.60 14.55 L11.75 13.50 Z"/><path d="M15.50 12.45 L16.35 13.50 L15.50 14.55 L14.65 13.50 Z"/><path d="M10.40 15.15 L11.25 16.20 L10.40 17.25 L9.55 16.20 Z"/><path d="M13.40 15.15 L14.25 16.20 L13.40 17.25 L12.55 16.20 Z"/><path d="M16.40 15.15 L17.25 16.20 L16.40 17.25 L15.55 16.20 Z"/><path d="M9.70 17.85 L10.55 18.90 L9.70 19.95 L8.85 18.90 Z"/><path d="M12.60 17.85 L13.45 18.90 L12.60 19.95 L11.75 18.90 Z"/><path d="M15.50 17.85 L16.35 18.90 L15.50 19.95 L14.65 18.90 Z"/></g><rect x="7.3" y="20.4" width="11.4" height="2.4" rx="1" fill="#eeeeee" stroke="#929292" stroke-width="0.8"/>
</svg>
<div class="cell rid" style="left:39px;top:468px;width:54px">214</div>
<div class="cell" style="left:102px;top:468px;width:141px">Textbook</div>
<div class="cell" style="left:252px;top:468px;width:291px">B Fetal Echocardiography (4)</div>
<div class="cell num" style="left:552px;top:468px;width:141px">0-7216-6284-6</div>
<div class="cell" style="left:702px;top:468px;width:66px">Drose, Julia A</div>
<div class="cell" style="left:777px;top:468px;width:91px">Saunders</div>
<div class="cell num" style="left:877px;top:468px;width:91px">4</div>
<div class="cell num" style="left:977px;top:468px;width:66px">1995</div>
<div class="cell" style="left:1052px;top:468px;width:91px">Active</div>
<svg class="abs" style="left:1152px;top:470px" width="22" height="22" viewBox="0 0 22 22">
<rect x="0.5" y="0.5" width="21" height="21" rx="1.5" fill="#fff" stroke="#6a6a6a" stroke-width="1"/><g>
<path d="M2.3 10.8 V19.4 H19.4 V10.8" fill="none" stroke="#cccc30" stroke-width="0.9"/>
<circle cx="7.1" cy="6.8" r="3.55" fill="#b8142a"/><circle cx="15" cy="6.8" r="3.55" fill="#12539e"/>
<circle cx="7.1" cy="14.8" r="3.55" fill="#de8426"/><circle cx="15" cy="14.8" r="3.55" fill="#2f7d32"/>
<g fill="none" stroke="#fff" stroke-width="1.15" stroke-linejoin="round"><path d="M5.5 8.8 L7.1 4.6 L8.7 8.8 M6.1 7.5 H8.1"/><path d="M13.9 4.8 V8.8 H15.2 A1.05 1.05 0 0 0 15.2 6.7 H13.9 M13.9 4.8 H15 A0.95 0.95 0 0 1 15 6.7"/>
<path d="M8.6 13.3 A1.7 1.9 0 1 0 8.6 16.3"/><path d="M13.9 12.8 V16.8 H14.7 A1.7 2 0 0 0 14.7 12.8 Z"/></g>
</g></svg>
<svg class="abs" style="left:1184px;top:468px" width="26" height="25" viewBox="0 0 26 25">
<rect x="0.5" y="0.5" width="25" height="24.5" rx="2" fill="#f4f4f4" stroke="#7e7e7e" stroke-width="1"/>
<path d="M0.5 24.5 H25.5" stroke="#c4c4c4" stroke-width="1"/>
<rect x="2" y="2" width="22" height="21" fill="url(#tbg)"/>
<path d="M6.6 7 Q6.8 4.4 9 4.4 Q10.6 2.6 13 3.2 Q15.6 2.6 17.2 4.4 Q19.4 4.4 19.6 7 Z" fill="#8eaae0"/><path d="M6.3 8.6 L19.7 8.6 L18.1 20.8 L7.9 20.8 Z" fill="#e8eaf0" stroke="#929292" stroke-width="1.5"/><rect x="5.6" y="6.3" width="14.8" height="2.6" rx="1.3" fill="#eeeeee" stroke="#929292" stroke-width="0.8"/><g fill="#5a78c8"><path d="M10.40 9.75 L11.25 10.80 L10.40 11.85 L9.55 10.80 Z"/><path d="M13.40 9.75 L14.25 10.80 L13.40 11.85 L12.55 10.80 Z"/><path d="M16.40 9.75 L17.25 10.80 L16.40 11.85 L15.55 10.80 Z"/><path d="M9.70 12.45 L10.55 13.50 L9.70 14.55 L8.85 13.50 Z"/><path d="M12.60 12.45 L13.45 13.50 L12.60 14.55 L11.75 13.50 Z"/><path d="M15.50 12.45 L16.35 13.50 L15.50 14.55 L14.65 13.50 Z"/><path d="M10.40 15.15 L11.25 16.20 L10.40 17.25 L9.55 16.20 Z"/><path d="M13.40 15.15 L14.25 16.20 L13.40 17.25 L12.55 16.20 Z"/><path d="M16.40 15.15 L17.25 16.20 L16.40 17.25 L15.55 16.20 Z"/><path d="M9.70 17.85 L10.55 18.90 L9.70 19.95 L8.85 18.90 Z"/><path d="M12.60 17.85 L13.45 18.90 L12.60 19.95 L11.75 18.90 Z"/><path d="M15.50 17.85 L16.35 18.90 L15.50 19.95 L14.65 18.90 Z"/></g><rect x="7.3" y="20.4" width="11.4" height="2.4" rx="1" fill="#eeeeee" stroke="#929292" stroke-width="0.8"/>
</svg>
<div class="cell rid" style="left:39px;top:494px;width:54px">215</div>
<div class="cell" style="left:102px;top:494px;width:141px">Textbook</div>
<div class="cell" style="left:252px;top:494px;width:291px">B Fetal Echocardiography (3)</div>
<div class="cell num" style="left:552px;top:494px;width:141px">0-7216-6284-6</div>
<div class="cell" style="left:702px;top:494px;width:66px">Drose, Julia A</div>
<div class="cell" style="left:777px;top:494px;width:91px">Saunders</div>
<div class="cell num" style="left:877px;top:494px;width:91px">1</div>
<div class="cell num" style="left:977px;top:494px;width:66px">1995</div>
<div class="cell" style="left:1052px;top:494px;width:91px">Active</div>
<svg class="abs" style="left:1152px;top:496px" width="22" height="22" viewBox="0 0 22 22">
<rect x="0.5" y="0.5" width="21" height="21" rx="1.5" fill="#fff" stroke="#6a6a6a" stroke-width="1"/><g>
<path d="M2.3 10.8 V19.4 H19.4 V10.8" fill="none" stroke="#cccc30" stroke-width="0.9"/>
<circle cx="7.1" cy="6.8" r="3.55" fill="#b8142a"/><circle cx="15" cy="6.8" r="3.55" fill="#12539e"/>
<circle cx="7.1" cy="14.8" r="3.55" fill="#de8426"/><circle cx="15" cy="14.8" r="3.55" fill="#2f7d32"/>
<g fill="none" stroke="#fff" stroke-width="1.15" stroke-linejoin="round"><path d="M5.5 8.8 L7.1 4.6 L8.7 8.8 M6.1 7.5 H8.1"/><path d="M13.9 4.8 V8.8 H15.2 A1.05 1.05 0 0 0 15.2 6.7 H13.9 M13.9 4.8 H15 A0.95 0.95 0 0 1 15 6.7"/>
<path d="M8.6 13.3 A1.7 1.9 0 1 0 8.6 16.3"/><path d="M13.9 12.8 V16.8 H14.7 A1.7 2 0 0 0 14.7 12.8 Z"/></g>
</g></svg>
<svg class="abs" style="left:1184px;top:494px" width="26" height="25" viewBox="0 0 26 25">
<rect x="0.5" y="0.5" width="25" height="24.5" rx="2" fill="#f4f4f4" stroke="#7e7e7e" stroke-width="1"/>
<path d="M0.5 24.5 H25.5" stroke="#c4c4c4" stroke-width="1"/>
<rect x="2" y="2" width="22" height="21" fill="url(#tbg)"/>
<path d="M6.6 7 Q6.8 4.4 9 4.4 Q10.6 2.6 13 3.2 Q15.6 2.6 17.2 4.4 Q19.4 4.4 19.6 7 Z" fill="#8eaae0"/><path d="M6.3 8.6 L19.7 8.6 L18.1 20.8 L7.9 20.8 Z" fill="#e8eaf0" stroke="#929292" stroke-width="1.5"/><rect x="5.6" y="6.3" width="14.8" height="2.6" rx="1.3" fill="#eeeeee" stroke="#929292" stroke-width="0.8"/><g fill="#5a78c8"><path d="M10.40 9.75 L11.25 10.80 L10.40 11.85 L9.55 10.80 Z"/><path d="M13.40 9.75 L14.25 10.80 L13.40 11.85 L12.55 10.80 Z"/><path d="M16.40 9.75 L17.25 10.80 L16.40 11.85 L15.55 10.80 Z"/><path d="M9.70 12.45 L10.55 13.50 L9.70 14.55 L8.85 13.50 Z"/><path d="M12.60 12.45 L13.45 13.50 L12.60 14.55 L11.75 13.50 Z"/><path d="M15.50 12.45 L16.35 13.50 L15.50 14.55 L14.65 13.50 Z"/><path d="M10.40 15.15 L11.25 16.20 L10.40 17.25 L9.55 16.20 Z"/><path d="M13.40 15.15 L14.25 16.20 L13.40 17.25 L12.55 16.20 Z"/><path d="M16.40 15.15 L17.25 16.20 L16.40 17.25 L15.55 16.20 Z"/><path d="M9.70 17.85 L10.55 18.90 L9.70 19.95 L8.85 18.90 Z"/><path d="M12.60 17.85 L13.45 18.90 L12.60 19.95 L11.75 18.90 Z"/><path d="M15.50 17.85 L16.35 18.90 L15.50 19.95 L14.65 18.90 Z"/></g><rect x="7.3" y="20.4" width="11.4" height="2.4" rx="1" fill="#eeeeee" stroke="#929292" stroke-width="0.8"/>
</svg>
<div class="cell rid" style="left:39px;top:520px;width:54px">216</div>
<div class="cell" style="left:102px;top:520px;width:141px">Textbook</div>
<div class="cell" style="left:252px;top:520px;width:291px">B Fetal Echocardiography (4)</div>
<div class="cell num" style="left:552px;top:520px;width:141px">0-7216-6284-6</div>
<div class="cell" style="left:702px;top:520px;width:66px">Drose, Julia A</div>
<div class="cell" style="left:777px;top:520px;width:91px">Saunders</div>
<div class="cell num" style="left:877px;top:520px;width:91px">1</div>
<div class="cell num" style="left:977px;top:520px;width:66px">1996</div>
<div class="cell" style="left:1052px;top:520px;width:91px">Active</div>
<svg class="abs" style="left:1152px;top:522px" width="22" height="22" viewBox="0 0 22 22">
<rect x="0.5" y="0.5" width="21" height="21" rx="1.5" fill="#fff" stroke="#6a6a6a" stroke-width="1"/><g>
<path d="M2.3 10.8 V19.4 H19.4 V10.8" fill="none" stroke="#cccc30" stroke-width="0.9"/>
<circle cx="7.1" cy="6.8" r="3.55" fill="#b8142a"/><circle cx="15" cy="6.8" r="3.55" fill="#12539e"/>
<circle cx="7.1" cy="14.8" r="3.55" fill="#de8426"/><circle cx="15" cy="14.8" r="3.55" fill="#2f7d32"/>
<g fill="none" stroke="#fff" stroke-width="1.15" stroke-linejoin="round"><path d="M5.5 8.8 L7.1 4.6 L8.7 8.8 M6.1 7.5 H8.1"/><path d="M13.9 4.8 V8.8 H15.2 A1.05 1.05 0 0 0 15.2 6.7 H13.9 M13.9 4.8 H15 A0.95 0.95 0 0 1 15 6.7"/>
<path d="M8.6 13.3 A1.7 1.9 0 1 0 8.6 16.3"/><path d="M13.9 12.8 V16.8 H14.7 A1.7 2 0 0 0 14.7 12.8 Z"/></g>
</g></svg>
<svg class="abs" style="left:1184px;top:520px" width="26" height="25" viewBox="0 0 26 25">
<rect x="0.5" y="0.5" width="25" height="24.5" rx="2" fill="#f4f4f4" stroke="#7e7e7e" stroke-width="1"/>
<path d="M0.5 24.5 H25.5" stroke="#c4c4c4" stroke-width="1"/>
<rect x="2" y="2" width="22" height="21" fill="url(#tbg)"/>
<path d="M6.6 7 Q6.8 4.4 9 4.4 Q10.6 2.6 13 3.2 Q15.6 2.6 17.2 4.4 Q19.4 4.4 19.6 7 Z" fill="#8eaae0"/><path d="M6.3 8.6 L19.7 8.6 L18.1 20.8 L7.9 20.8 Z" fill="#e8eaf0" stroke="#929292" stroke-width="1.5"/><rect x="5.6" y="6.3" width="14.8" height="2.6" rx="1.3" fill="#eeeeee" stroke="#929292" stroke-width="0.8"/><g fill="#5a78c8"><path d="M10.40 9.75 L11.25 10.80 L10.40 11.85 L9.55 10.80 Z"/><path d="M13.40 9.75 L14.25 10.80 L13.40 11.85 L12.55 10.80 Z"/><path d="M16.40 9.75 L17.25 10.80 L16.40 11.85 L15.55 10.80 Z"/><path d="M9.70 12.45 L10.55 13.50 L9.70 14.55 L8.85 13.50 Z"/><path d="M12.60 12.45 L13.45 13.50 L12.60 14.55 L11.75 13.50 Z"/><path d="M15.50 12.45 L16.35 13.50 L15.50 14.55 L14.65 13.50 Z"/><path d="M10.40 15.15 L11.25 16.20 L10.40 17.25 L9.55 16.20 Z"/><path d="M13.40 15.15 L14.25 16.20 L13.40 17.25 L12.55 16.20 Z"/><path d="M16.40 15.15 L17.25 16.20 L16.40 17.25 L15.55 16.20 Z"/><path d="M9.70 17.85 L10.55 18.90 L9.70 19.95 L8.85 18.90 Z"/><path d="M12.60 17.85 L13.45 18.90 L12.60 19.95 L11.75 18.90 Z"/><path d="M15.50 17.85 L16.35 18.90 L15.50 19.95 L14.65 18.90 Z"/></g><rect x="7.3" y="20.4" width="11.4" height="2.4" rx="1" fill="#eeeeee" stroke="#929292" stroke-width="0.8"/>
</svg>
<div class="cell rid" style="left:39px;top:546px;width:54px">217</div>
<div class="cell" style="left:102px;top:546px;width:141px">Textbook</div>
<div class="cell" style="left:252px;top:546px;width:291px">E Fetal Echocardiography (5)</div>
<div class="cell num" style="left:552px;top:546px;width:141px">0-7216-6284-6</div>
<div class="cell" style="left:702px;top:546px;width:66px">Drose, Julia A</div>
<div class="cell" style="left:777px;top:546px;width:91px">Saunders</div>
<div class="cell num" style="left:877px;top:546px;width:91px">5</div>
<div class="cell num" style="left:977px;top:546px;width:66px">1995</div>
<div class="cell" style="left:1052px;top:546px;width:91px">Active</div>
<svg class="abs" style="left:1152px;top:548px" width="22" height="22" viewBox="0 0 22 22">
<rect x="0.5" y="0.5" width="21" height="21" rx="1.5" fill="#fff" stroke="#6a6a6a" stroke-width="1"/><g>
<path d="M2.3 10.8 V19.4 H19.4 V10.8" fill="none" stroke="#cccc30" stroke-width="0.9"/>
<circle cx="7.1" cy="6.8" r="3.55" fill="#b8142a"/><circle cx="15" cy="6.8" r="3.55" fill="#12539e"/>
<circle cx="7.1" cy="14.8" r="3.55" fill="#de8426"/><circle cx="15" cy="14.8" r="3.55" fill="#2f7d32"/>
<g fill="none" stroke="#fff" stroke-width="1.15" stroke-linejoin="round"><path d="M5.5 8.8 L7.1 4.6 L8.7 8.8 M6.1 7.5 H8.1"/><path d="M13.9 4.8 V8.8 H15.2 A1.05 1.05 0 0 0 15.2 6.7 H13.9 M13.9 4.8 H15 A0.95 0.95 0 0 1 15 6.7"/>
<path d="M8.6 13.3 A1.7 1.9 0 1 0 8.6 16.3"/><path d="M13.9 12.8 V16.8 H14.7 A1.7 2 0 0 0 14.7 12.8 Z"/></g>
</g></svg>
<svg class="abs" style="left:1184px;top:546px" width="26" height="25" viewBox="0 0 26 25">
<rect x="0.5" y="0.5" width="25" height="24.5" rx="2" fill="#f4f4f4" stroke="#7e7e7e" stroke-width="1"/>
<path d="M0.5 24.5 H25.5" stroke="#c4c4c4" stroke-width="1"/>
<rect x="2" y="2" width="22" height="21" fill="url(#tbg)"/>
<path d="M6.6 7 Q6.8 4.4 9 4.4 Q10.6 2.6 13 3.2 Q15.6 2.6 17.2 4.4 Q19.4 4.4 19.6 7 Z" fill="#8eaae0"/><path d="M6.3 8.6 L19.7 8.6 L18.1 20.8 L7.9 20.8 Z" fill="#e8eaf0" stroke="#929292" stroke-width="1.5"/><rect x="5.6" y="6.3" width="14.8" height="2.6" rx="1.3" fill="#eeeeee" stroke="#929292" stroke-width="0.8"/><g fill="#5a78c8"><path d="M10.40 9.75 L11.25 10.80 L10.40 11.85 L9.55 10.80 Z"/><path d="M13.40 9.75 L14.25 10.80 L13.40 11.85 L12.55 10.80 Z"/><path d="M16.40 9.75 L17.25 10.80 L16.40 11.85 L15.55 10.80 Z"/><path d="M9.70 12.45 L10.55 13.50 L9.70 14.55 L8.85 13.50 Z"/><path d="M12.60 12.45 L13.45 13.50 L12.60 14.55 L11.75 13.50 Z"/><path d="M15.50 12.45 L16.35 13.50 L15.50 14.55 L14.65 13.50 Z"/><path d="M10.40 15.15 L11.25 16.20 L10.40 17.25 L9.55 16.20 Z"/><path d="M13.40 15.15 L14.25 16.20 L13.40 17.25 L12.55 16.20 Z"/><path d="M16.40 15.15 L17.25 16.20 L16.40 17.25 L15.55 16.20 Z"/><path d="M9.70 17.85 L10.55 18.90 L9.70 19.95 L8.85 18.90 Z"/><path d="M12.60 17.85 L13.45 18.90 L12.60 19.95 L11.75 18.90 Z"/><path d="M15.50 17.85 L16.35 18.90 L15.50 19.95 L14.65 18.90 Z"/></g><rect x="7.3" y="20.4" width="11.4" height="2.4" rx="1" fill="#eeeeee" stroke="#929292" stroke-width="0.8"/>
</svg>
<div class="cell rid" style="left:39px;top:572px;width:54px">218</div>
<div class="cell" style="left:102px;top:572px;width:141px">Textbook</div>
<div class="cell" style="left:252px;top:572px;width:291px">F Fetal Echocardiography (6)</div>
<div class="cell num" style="left:552px;top:572px;width:141px">0-7216-6284-6</div>
<div class="cell" style="left:702px;top:572px;width:66px">Drose, Julia A</div>
<div class="cell" style="left:777px;top:572px;width:91px">Saunders</div>
<div class="cell num" style="left:877px;top:572px;width:91px">6</div>
<div class="cell num" style="left:977px;top:572px;width:66px">1995</div>
<div class="cell" style="left:1052px;top:572px;width:91px">Active</div>
<svg class="abs" style="left:1152px;top:574px" width="22" height="22" viewBox="0 0 22 22">
<rect x="0.5" y="0.5" width="21" height="21" rx="1.5" fill="#fff" stroke="#6a6a6a" stroke-width="1"/><g>
<path d="M2.3 10.8 V19.4 H19.4 V10.8" fill="none" stroke="#cccc30" stroke-width="0.9"/>
<circle cx="7.1" cy="6.8" r="3.55" fill="#b8142a"/><circle cx="15" cy="6.8" r="3.55" fill="#12539e"/>
<circle cx="7.1" cy="14.8" r="3.55" fill="#de8426"/><circle cx="15" cy="14.8" r="3.55" fill="#2f7d32"/>
<g fill="none" stroke="#fff" stroke-width="1.15" stroke-linejoin="round"><path d="M5.5 8.8 L7.1 4.6 L8.7 8.8 M6.1 7.5 H8.1"/><path d="M13.9 4.8 V8.8 H15.2 A1.05 1.05 0 0 0 15.2 6.7 H13.9 M13.9 4.8 H15 A0.95 0.95 0 0 1 15 6.7"/>
<path d="M8.6 13.3 A1.7 1.9 0 1 0 8.6 16.3"/><path d="M13.9 12.8 V16.8 H14.7 A1.7 2 0 0 0 14.7 12.8 Z"/></g>
</g></svg>
<svg class="abs" style="left:1184px;top:572px" width="26" height="25" viewBox="0 0 26 25">
<rect x="0.5" y="0.5" width="25" height="24.5" rx="2" fill="#f4f4f4" stroke="#7e7e7e" stroke-width="1"/>
<path d="M0.5 24.5 H25.5" stroke="#c4c4c4" stroke-width="1"/>
<rect x="2" y="2" width="22" height="21" fill="url(#tbg)"/>
<path d="M6.6 7 Q6.8 4.4 9 4.4 Q10.6 2.6 13 3.2 Q15.6 2.6 17.2 4.4 Q19.4 4.4 19.6 7 Z" fill="#8eaae0"/><path d="M6.3 8.6 L19.7 8.6 L18.1 20.8 L7.9 20.8 Z" fill="#e8eaf0" stroke="#929292" stroke-width="1.5"/><rect x="5.6" y="6.3" width="14.8" height="2.6" rx="1.3" fill="#eeeeee" stroke="#929292" stroke-width="0.8"/><g fill="#5a78c8"><path d="M10.40 9.75 L11.25 10.80 L10.40 11.85 L9.55 10.80 Z"/><path d="M13.40 9.75 L14.25 10.80 L13.40 11.85 L12.55 10.80 Z"/><path d="M16.40 9.75 L17.25 10.80 L16.40 11.85 L15.55 10.80 Z"/><path d="M9.70 12.45 L10.55 13.50 L9.70 14.55 L8.85 13.50 Z"/><path d="M12.60 12.45 L13.45 13.50 L12.60 14.55 L11.75 13.50 Z"/><path d="M15.50 12.45 L16.35 13.50 L15.50 14.55 L14.65 13.50 Z"/><path d="M10.40 15.15 L11.25 16.20 L10.40 17.25 L9.55 16.20 Z"/><path d="M13.40 15.15 L14.25 16.20 L13.40 17.25 L12.55 16.20 Z"/><path d="M16.40 15.15 L17.25 16.20 L16.40 17.25 L15.55 16.20 Z"/><path d="M9.70 17.85 L10.55 18.90 L9.70 19.95 L8.85 18.90 Z"/><path d="M12.60 17.85 L13.45 18.90 L12.60 19.95 L11.75 18.90 Z"/><path d="M15.50 17.85 L16.35 18.90 L15.50 19.95 L14.65 18.90 Z"/></g><rect x="7.3" y="20.4" width="11.4" height="2.4" rx="1" fill="#eeeeee" stroke="#929292" stroke-width="0.8"/>
</svg>
<div class="cell rid" style="left:39px;top:598px;width:54px">225</div>
<div class="cell" style="left:102px;top:598px;width:141px">Textbook</div>
<div class="cell" style="left:252px;top:598px;width:291px">Professional Standards</div>
<div class="cell num" style="left:552px;top:598px;width:141px">12345677899</div>
<div class="cell" style="left:702px;top:598px;width:66px">John Doe</div>
<div class="cell" style="left:1052px;top:598px;width:91px">Active</div>
<svg class="abs" style="left:1152px;top:600px" width="22" height="22" viewBox="0 0 22 22">
<rect x="0.5" y="0.5" width="21" height="21" rx="1.5" fill="#fff" stroke="#6a6a6a" stroke-width="1"/><g>
<path d="M2.3 10.8 V19.4 H19.4 V10.8" fill="none" stroke="#cccc30" stroke-width="0.9"/>
<circle cx="7.1" cy="6.8" r="3.55" fill="#b8142a"/><circle cx="15" cy="6.8" r="3.55" fill="#12539e"/>
<circle cx="7.1" cy="14.8" r="3.55" fill="#de8426"/><circle cx="15" cy="14.8" r="3.55" fill="#2f7d32"/>
<g fill="none" stroke="#fff" stroke-width="1.15" stroke-linejoin="round"><path d="M5.5 8.8 L7.1 4.6 L8.7 8.8 M6.1 7.5 H8.1"/><path d="M13.9 4.8 V8.8 H15.2 A1.05 1.05 0 0 0 15.2 6.7 H13.9 M13.9 4.8 H15 A0.95 0.95 0 0 1 15 6.7"/>
<path d="M8.6 13.3 A1.7 1.9 0 1 0 8.6 16.3"/><path d="M13.9 12.8 V16.8 H14.7 A1.7 2 0 0 0 14.7 12.8 Z"/></g>
</g></svg>
<svg class="abs" style="left:1184px;top:598px" width="26" height="25" viewBox="0 0 26 25">
<rect x="0.5" y="0.5" width="25" height="24.5" rx="2" fill="#f4f4f4" stroke="#7e7e7e" stroke-width="1"/>
<path d="M0.5 24.5 H25.5" stroke="#c4c4c4" stroke-width="1"/>
<rect x="2" y="2" width="22" height="21" fill="url(#tbg)"/>
<path d="M6.6 7 Q6.8 4.4 9 4.4 Q10.6 2.6 13 3.2 Q15.6 2.6 17.2 4.4 Q19.4 4.4 19.6 7 Z" fill="#8eaae0"/><path d="M6.3 8.6 L19.7 8.6 L18.1 20.8 L7.9 20.8 Z" fill="#e8eaf0" stroke="#929292" stroke-width="1.5"/><rect x="5.6" y="6.3" width="14.8" height="2.6" rx="1.3" fill="#eeeeee" stroke="#929292" stroke-width="0.8"/><g fill="#5a78c8"><path d="M10.40 9.75 L11.25 10.80 L10.40 11.85 L9.55 10.80 Z"/><path d="M13.40 9.75 L14.25 10.80 L13.40 11.85 L12.55 10.80 Z"/><path d="M16.40 9.75 L17.25 10.80 L16.40 11.85 L15.55 10.80 Z"/><path d="M9.70 12.45 L10.55 13.50 L9.70 14.55 L8.85 13.50 Z"/><path d="M12.60 12.45 L13.45 13.50 L12.60 14.55 L11.75 13.50 Z"/><path d="M15.50 12.45 L16.35 13.50 L15.50 14.55 L14.65 13.50 Z"/><path d="M10.40 15.15 L11.25 16.20 L10.40 17.25 L9.55 16.20 Z"/><path d="M13.40 15.15 L14.25 16.20 L13.40 17.25 L12.55 16.20 Z"/><path d="M16.40 15.15 L17.25 16.20 L16.40 17.25 L15.55 16.20 Z"/><path d="M9.70 17.85 L10.55 18.90 L9.70 19.95 L8.85 18.90 Z"/><path d="M12.60 17.85 L13.45 18.90 L12.60 19.95 L11.75 18.90 Z"/><path d="M15.50 17.85 L16.35 18.90 L15.50 19.95 L14.65 18.90 Z"/></g><rect x="7.3" y="20.4" width="11.4" height="2.4" rx="1" fill="#eeeeee" stroke="#929292" stroke-width="0.8"/>
</svg>
<div class="cell rid" style="left:39px;top:624px;width:54px">227</div>
<div class="cell" style="left:102px;top:624px;width:141px">Textbook</div>
<div class="cell" style="left:252px;top:624px;width:291px">G Fetal Echocardiography(Req)</div>
<div class="cell num" style="left:552px;top:624px;width:141px">0-7216-6284-6</div>
<div class="cell" style="left:702px;top:624px;width:66px">Drose, Julia A</div>
<div class="cell" style="left:777px;top:624px;width:91px">Saunders</div>
<div class="cell num" style="left:877px;top:624px;width:91px">1</div>
<div class="cell num" style="left:977px;top:624px;width:66px">1995</div>
<div class="cell" style="left:1052px;top:624px;width:91px">Active</div>
<svg class="abs" style="left:1152px;top:626px" width="22" height="22" viewBox="0 0 22 22">
<rect x="0.5" y="0.5" width="21" height="21" rx="1.5" fill="#fff" stroke="#6a6a6a" stroke-width="1"/><g>
<path d="M2.3 10.8 V19.4 H19.4 V10.8" fill="none" stroke="#cccc30" stroke-width="0.9"/>
<circle cx="7.1" cy="6.8" r="3.55" fill="#b8142a"/><circle cx="15" cy="6.8" r="3.55" fill="#12539e"/>
<circle cx="7.1" cy="14.8" r="3.55" fill="#de8426"/><circle cx="15" cy="14.8" r="3.55" fill="#2f7d32"/>
<g fill="none" stroke="#fff" stroke-width="1.15" stroke-linejoin="round"><path d="M5.5 8.8 L7.1 4.6 L8.7 8.8 M6.1 7.5 H8.1"/><path d="M13.9 4.8 V8.8 H15.2 A1.05 1.05 0 0 0 15.2 6.7 H13.9 M13.9 4.8 H15 A0.95 0.95 0 0 1 15 6.7"/>
<path d="M8.6 13.3 A1.7 1.9 0 1 0 8.6 16.3"/><path d="M13.9 12.8 V16.8 H14.7 A1.7 2 0 0 0 14.7 12.8 Z"/></g>
</g></svg>
<svg class="abs" style="left:1184px;top:624px" width="26" height="25" viewBox="0 0 26 25">
<rect x="0.5" y="0.5" width="25" height="24.5" rx="2" fill="#f4f4f4" stroke="#7e7e7e" stroke-width="1"/>
<path d="M0.5 24.5 H25.5" stroke="#c4c4c4" stroke-width="1"/>
<rect x="2" y="2" width="22" height="21" fill="url(#tbg)"/>
<path d="M6.6 7 Q6.8 4.4 9 4.4 Q10.6 2.6 13 3.2 Q15.6 2.6 17.2 4.4 Q19.4 4.4 19.6 7 Z" fill="#8eaae0"/><path d="M6.3 8.6 L19.7 8.6 L18.1 20.8 L7.9 20.8 Z" fill="#e8eaf0" stroke="#929292" stroke-width="1.5"/><rect x="5.6" y="6.3" width="14.8" height="2.6" rx="1.3" fill="#eeeeee" stroke="#929292" stroke-width="0.8"/><g fill="#5a78c8"><path d="M10.40 9.75 L11.25 10.80 L10.40 11.85 L9.55 10.80 Z"/><path d="M13.40 9.75 L14.25 10.80 L13.40 11.85 L12.55 10.80 Z"/><path d="M16.40 9.75 L17.25 10.80 L16.40 11.85 L15.55 10.80 Z"/><path d="M9.70 12.45 L10.55 13.50 L9.70 14.55 L8.85 13.50 Z"/><path d="M12.60 12.45 L13.45 13.50 L12.60 14.55 L11.75 13.50 Z"/><path d="M15.50 12.45 L16.35 13.50 L15.50 14.55 L14.65 13.50 Z"/><path d="M10.40 15.15 L11.25 16.20 L10.40 17.25 L9.55 16.20 Z"/><path d="M13.40 15.15 L14.25 16.20 L13.40 17.25 L12.55 16.20 Z"/><path d="M16.40 15.15 L17.25 16.20 L16.40 17.25 L15.55 16.20 Z"/><path d="M9.70 17.85 L10.55 18.90 L9.70 19.95 L8.85 18.90 Z"/><path d="M12.60 17.85 L13.45 18.90 L12.60 19.95 L11.75 18.90 Z"/><path d="M15.50 17.85 L16.35 18.90 L15.50 19.95 L14.65 18.90 Z"/></g><rect x="7.3" y="20.4" width="11.4" height="2.4" rx="1" fill="#eeeeee" stroke="#929292" stroke-width="0.8"/>
</svg>
<div class="cell rid" style="left:39px;top:650px;width:54px">234</div>
<div class="cell" style="left:102px;top:650px;width:141px">Textbook</div>
<div class="cell" style="left:252px;top:650px;width:291px">Mutltiple Citations</div>
<div class="cell num" style="left:552px;top:650px;width:141px">23231</div>
<div class="cell" style="left:702px;top:650px;width:66px">Jane Doe</div>
<div class="cell" style="left:777px;top:650px;width:91px">Jane Doe</div>
<div class="cell num" style="left:877px;top:650px;width:91px">First</div>
<div class="cell num" style="left:977px;top:650px;width:66px">2015</div>
<div class="cell" style="left:1052px;top:650px;width:91px">Active</div>
<svg class="abs" style="left:1152px;top:652px" width="22" height="22" viewBox="0 0 22 22">
<rect x="0.5" y="0.5" width="21" height="21" rx="1.5" fill="#f2f2f2" stroke="#8a8a8a" stroke-width="1"/><g opacity=".35">
<path d="M2.3 10.8 V19.4 H19.4 V10.8" fill="none" stroke="#cccc30" stroke-width="0.9"/>
<circle cx="7.1" cy="6.8" r="3.55" fill="#b8142a"/><circle cx="15" cy="6.8" r="3.55" fill="#12539e"/>
<circle cx="7.1" cy="14.8" r="3.55" fill="#de8426"/><circle cx="15" cy="14.8" r="3.55" fill="#2f7d32"/>
<g fill="none" stroke="#fff" stroke-width="1.15" stroke-linejoin="round"><path d="M5.5 8.8 L7.1 4.6 L8.7 8.8 M6.1 7.5 H8.1"/><path d="M13.9 4.8 V8.8 H15.2 A1.05 1.05 0 0 0 15.2 6.7 H13.9 M13.9 4.8 H15 A0.95 0.95 0 0 1 15 6.7"/>
<path d="M8.6 13.3 A1.7 1.9 0 1 0 8.6 16.3"/><path d="M13.9 12.8 V16.8 H14.7 A1.7 2 0 0 0 14.7 12.8 Z"/></g>
</g></svg>
<svg class="abs" style="left:1184px;top:650px" width="26" height="27" viewBox="0 0 26 27">
<rect x="0.5" y="0.5" width="25" height="26" fill="#dcdcdc" stroke="#8a8a8a" stroke-width="1"/>
<rect x="1.5" y="1.5" width="23" height="24" fill="none" stroke="#f4f4f4" stroke-width="1"/>
<rect x="2" y="2" width="22" height="23" fill="url(#tbo)"/>
<path d="M6.6 7.6 Q6.8 5.0 9 5.0 Q10.6 3.2 13 3.8000000000000003 Q15.6 3.2 17.2 5.0 Q19.4 5.0 19.6 7.6 Z" fill="#1f5fd8"/><path d="M6.3 9.2 L19.7 9.2 L18.1 21.400000000000002 L7.9 21.400000000000002 Z" fill="#e4e8f0" stroke="#6a6a6a" stroke-width="1.5"/><rect x="5.6" y="6.8999999999999995" width="14.8" height="2.6" rx="1.3" fill="#dcdcdc" stroke="#6a6a6a" stroke-width="0.8"/><g fill="#1d3f9a"><path d="M10.40 10.35 L11.25 11.40 L10.40 12.45 L9.55 11.40 Z"/><path d="M13.40 10.35 L14.25 11.40 L13.40 12.45 L12.55 11.40 Z"/><path d="M16.40 10.35 L17.25 11.40 L16.40 12.45 L15.55 11.40 Z"/><path d="M9.70 13.05 L10.55 14.10 L9.70 15.15 L8.85 14.10 Z"/><path d="M12.60 13.05 L13.45 14.10 L12.60 15.15 L11.75 14.10 Z"/><path d="M15.50 13.05 L16.35 14.10 L15.50 15.15 L14.65 14.10 Z"/><path d="M10.40 15.75 L11.25 16.80 L10.40 17.85 L9.55 16.80 Z"/><path d="M13.40 15.75 L14.25 16.80 L13.40 17.85 L12.55 16.80 Z"/><path d="M16.40 15.75 L17.25 16.80 L16.40 17.85 L15.55 16.80 Z"/><path d="M9.70 18.45 L10.55 19.50 L9.70 20.55 L8.85 19.50 Z"/><path d="M12.60 18.45 L13.45 19.50 L12.60 20.55 L11.75 19.50 Z"/><path d="M15.50 18.45 L16.35 19.50 L15.50 20.55 L14.65 19.50 Z"/></g><rect x="7.3" y="21.0" width="11.4" height="2.4" rx="1" fill="#dcdcdc" stroke="#6a6a6a" stroke-width="0.8"/>
</svg>
<div class="cell rid" style="left:39px;top:676px;width:54px">235</div>
<div class="cell" style="left:102px;top:676px;width:141px">Textbook</div>
<div class="cell" style="left:252px;top:676px;width:291px">Test for Citations</div>
<div class="cell num" style="left:552px;top:676px;width:141px">asdf</div>
<div class="cell" style="left:702px;top:676px;width:66px">Mital Patel</div>
<div class="cell" style="left:777px;top:676px;width:91px">Mital Patel</div>
<div class="cell num" style="left:877px;top:676px;width:91px">first</div>
<div class="cell num" style="left:977px;top:676px;width:66px">2015</div>
<div class="cell" style="left:1052px;top:676px;width:91px">Active</div>
<svg class="abs" style="left:1152px;top:678px" width="22" height="22" viewBox="0 0 22 22">
<rect x="0.5" y="0.5" width="21" height="21" rx="1.5" fill="#fff" stroke="#6a6a6a" stroke-width="1"/><g>
<path d="M2.3 10.8 V19.4 H19.4 V10.8" fill="none" stroke="#cccc30" stroke-width="0.9"/>
<circle cx="7.1" cy="6.8" r="3.55" fill="#b8142a"/><circle cx="15" cy="6.8" r="3.55" fill="#12539e"/>
<circle cx="7.1" cy="14.8" r="3.55" fill="#de8426"/><circle cx="15" cy="14.8" r="3.55" fill="#2f7d32"/>
<g fill="none" stroke="#fff" stroke-width="1.15" stroke-linejoin="round"><path d="M5.5 8.8 L7.1 4.6 L8.7 8.8 M6.1 7.5 H8.1"/><path d="M13.9 4.8 V8.8 H15.2 A1.05 1.05 0 0 0 15.2 6.7 H13.9 M13.9 4.8 H15 A0.95 0.95 0 0 1 15 6.7"/>
<path d="M8.6 13.3 A1.7 1.9 0 1 0 8.6 16.3"/><path d="M13.9 12.8 V16.8 H14.7 A1.7 2 0 0 0 14.7 12.8 Z"/></g>
</g></svg>
<svg class="abs" style="left:1184px;top:676px" width="26" height="25" viewBox="0 0 26 25">
<rect x="0.5" y="0.5" width="25" height="24.5" rx="2" fill="#f4f4f4" stroke="#7e7e7e" stroke-width="1"/>
<path d="M0.5 24.5 H25.5" stroke="#c4c4c4" stroke-width="1"/>
<rect x="2" y="2" width="22" height="21" fill="url(#tbg)"/>
<path d="M6.6 7 Q6.8 4.4 9 4.4 Q10.6 2.6 13 3.2 Q15.6 2.6 17.2 4.4 Q19.4 4.4 19.6 7 Z" fill="#8eaae0"/><path d="M6.3 8.6 L19.7 8.6 L18.1 20.8 L7.9 20.8 Z" fill="#e8eaf0" stroke="#929292" stroke-width="1.5"/><rect x="5.6" y="6.3" width="14.8" height="2.6" rx="1.3" fill="#eeeeee" stroke="#929292" stroke-width="0.8"/><g fill="#5a78c8"><path d="M10.40 9.75 L11.25 10.80 L10.40 11.85 L9.55 10.80 Z"/><path d="M13.40 9.75 L14.25 10.80 L13.40 11.85 L12.55 10.80 Z"/><path d="M16.40 9.75 L17.25 10.80 L16.40 11.85 L15.55 10.80 Z"/><path d="M9.70 12.45 L10.55 13.50 L9.70 14.55 L8.85 13.50 Z"/><path d="M12.60 12.45 L13.45 13.50 L12.60 14.55 L11.75 13.50 Z"/><path d="M15.50 12.45 L16.35 13.50 L15.50 14.55 L14.65 13.50 Z"/><path d="M10.40 15.15 L11.25 16.20 L10.40 17.25 L9.55 16.20 Z"/><path d="M13.40 15.15 L14.25 16.20 L13.40 17.25 L12.55 16.20 Z"/><path d="M16.40 15.15 L17.25 16.20 L16.40 17.25 L15.55 16.20 Z"/><path d="M9.70 17.85 L10.55 18.90 L9.70 19.95 L8.85 18.90 Z"/><path d="M12.60 17.85 L13.45 18.90 L12.60 19.95 L11.75 18.90 Z"/><path d="M15.50 17.85 L16.35 18.90 L15.50 19.95 L14.65 18.90 Z"/></g><rect x="7.3" y="20.4" width="11.4" height="2.4" rx="1" fill="#eeeeee" stroke="#929292" stroke-width="0.8"/>
</svg>
<div class="cell rid" style="left:39px;top:702px;width:54px">236</div>
<div class="cell" style="left:102px;top:702px;width:141px">Textbook</div>
<div class="cell" style="left:252px;top:702px;width:291px">G Fetal Echocardiography(Req) TEST</div>
<div class="cell num" style="left:552px;top:702px;width:141px">0-7216-6284-6</div>
<div class="cell" style="left:702px;top:702px;width:66px">Drose, Julia A</div>
<div class="cell" style="left:777px;top:702px;width:91px">Saunders</div>
<div class="cell num" style="left:877px;top:702px;width:91px">1</div>
<div class="cell num" style="left:977px;top:702px;width:66px">1995</div>
<div class="cell" style="left:1052px;top:702px;width:91px">Active</div>
<svg class="abs" style="left:1152px;top:704px" width="22" height="22" viewBox="0 0 22 22">
<rect x="0.5" y="0.5" width="21" height="21" rx="1.5" fill="#fff" stroke="#6a6a6a" stroke-width="1"/><g>
<path d="M2.3 10.8 V19.4 H19.4 V10.8" fill="none" stroke="#cccc30" stroke-width="0.9"/>
<circle cx="7.1" cy="6.8" r="3.55" fill="#b8142a"/><circle cx="15" cy="6.8" r="3.55" fill="#12539e"/>
<circle cx="7.1" cy="14.8" r="3.55" fill="#de8426"/><circle cx="15" cy="14.8" r="3.55" fill="#2f7d32"/>
<g fill="none" stroke="#fff" stroke-width="1.15" stroke-linejoin="round"><path d="M5.5 8.8 L7.1 4.6 L8.7 8.8 M6.1 7.5 H8.1"/><path d="M13.9 4.8 V8.8 H15.2 A1.05 1.05 0 0 0 15.2 6.7 H13.9 M13.9 4.8 H15 A0.95 0.95 0 0 1 15 6.7"/>
<path d="M8.6 13.3 A1.7 1.9 0 1 0 8.6 16.3"/><path d="M13.9 12.8 V16.8 H14.7 A1.7 2 0 0 0 14.7 12.8 Z"/></g>
</g></svg>
<svg class="abs" style="left:1184px;top:702px" width="26" height="25" viewBox="0 0 26 25">
<rect x="0.5" y="0.5" width="25" height="24.5" rx="2" fill="#f4f4f4" stroke="#7e7e7e" stroke-width="1"/>
<path d="M0.5 24.5 H25.5" stroke="#c4c4c4" stroke-width="1"/>
<rect x="2" y="2" width="22" height="21" fill="url(#tbg)"/>
<path d="M6.6 7 Q6.8 4.4 9 4.4 Q10.6 2.6 13 3.2 Q15.6 2.6 17.2 4.4 Q19.4 4.4 19.6 7 Z" fill="#8eaae0"/><path d="M6.3 8.6 L19.7 8.6 L18.1 20.8 L7.9 20.8 Z" fill="#e8eaf0" stroke="#929292" stroke-width="1.5"/><rect x="5.6" y="6.3" width="14.8" height="2.6" rx="1.3" fill="#eeeeee" stroke="#929292" stroke-width="0.8"/><g fill="#5a78c8"><path d="M10.40 9.75 L11.25 10.80 L10.40 11.85 L9.55 10.80 Z"/><path d="M13.40 9.75 L14.25 10.80 L13.40 11.85 L12.55 10.80 Z"/><path d="M16.40 9.75 L17.25 10.80 L16.40 11.85 L15.55 10.80 Z"/><path d="M9.70 12.45 L10.55 13.50 L9.70 14.55 L8.85 13.50 Z"/><path d="M12.60 12.45 L13.45 13.50 L12.60 14.55 L11.75 13.50 Z"/><path d="M15.50 12.45 L16.35 13.50 L15.50 14.55 L14.65 13.50 Z"/><path d="M10.40 15.15 L11.25 16.20 L10.40 17.25 L9.55 16.20 Z"/><path d="M13.40 15.15 L14.25 16.20 L13.40 17.25 L12.55 16.20 Z"/><path d="M16.40 15.15 L17.25 16.20 L16.40 17.25 L15.55 16.20 Z"/><path d="M9.70 17.85 L10.55 18.90 L9.70 19.95 L8.85 18.90 Z"/><path d="M12.60 17.85 L13.45 18.90 L12.60 19.95 L11.75 18.90 Z"/><path d="M15.50 17.85 L16.35 18.90 L15.50 19.95 L14.65 18.90 Z"/></g><rect x="7.3" y="20.4" width="11.4" height="2.4" rx="1" fill="#eeeeee" stroke="#929292" stroke-width="0.8"/>
</svg>
<div id="hdr"></div>
<div id="hdr0"></div>
<div class="hsep" style="left:96px"></div>
<div class="hsep" style="left:246px"></div>
<div class="hsep" style="left:546px"></div>
<div class="hsep" style="left:696px"></div>
<div class="hsep" style="left:771px"></div>
<div class="hsep" style="left:871px"></div>
<div class="hsep" style="left:971px"></div>
<div class="hsep" style="left:1046px"></div>
<div class="hsep" style="left:1146px"></div>
<div class="hsep" style="left:1178px"></div>
<div class="hsep" style="left:1214px"></div>
<svg width="0" height="0" style="position:absolute"><defs>
<linearGradient id="fg" x1="0" y1="0" x2="1" y2="0.6"><stop offset="0" stop-color="#6a6a6a"/><stop offset="0.38" stop-color="#e6e6e6"/><stop offset="0.62" stop-color="#a8a8a8"/><stop offset="1" stop-color="#505050"/></linearGradient>
<linearGradient id="fm" x1="0" y1="0" x2="1" y2="0"><stop offset="0" stop-color="#c0108a"/><stop offset="0.45" stop-color="#ff40e0"/><stop offset="1" stop-color="#b0007a"/></linearGradient>
</defs></svg>
<div class="htx" style="left:39px">Ref ID</div>
<svg class="abs" style="left:76px;top:161px" width="14" height="14" viewBox="0 0 14 14"><path d="M1 1.2 L13 1.2 L8.6 5.6 L8.6 12.6 L5.4 10 L5.4 5.6 Z" fill="url(#fg)" stroke="#433c38" stroke-width="1" stroke-linejoin="round"/></svg>
<div class="htx" style="left:101px">Ref Type</div>
<svg class="abs" style="left:226px;top:161px" width="14" height="14" viewBox="0 0 14 14"><path d="M1 1.2 L13 1.2 L8.6 5.6 L8.6 12.6 L5.4 10 L5.4 5.6 Z" fill="url(#fg)" stroke="#433c38" stroke-width="1" stroke-linejoin="round"/></svg>
<div class="htx" style="left:251px">Title</div>
<svg class="abs" style="left:526px;top:161px" width="14" height="14" viewBox="0 0 14 14"><path d="M1 1.2 L13 1.2 L8.6 5.6 L8.6 12.6 L5.4 10 L5.4 5.6 Z" fill="url(#fg)" stroke="#433c38" stroke-width="1" stroke-linejoin="round"/></svg>
<div class="htx" style="left:551px">ISBN</div>
<svg class="abs" style="left:676px;top:161px" width="14" height="14" viewBox="0 0 14 14"><path d="M1 1.2 L13 1.2 L8.6 5.6 L8.6 12.6 L5.4 10 L5.4 5.6 Z" fill="url(#fg)" stroke="#433c38" stroke-width="1" stroke-linejoin="round"/></svg>
<div class="htx" style="left:701px">Author</div>
<svg class="abs" style="left:751px;top:161px" width="14" height="14" viewBox="0 0 14 14"><path d="M1 1.2 L13 1.2 L8.6 5.6 L8.6 12.6 L5.4 10 L5.4 5.6 Z" fill="url(#fg)" stroke="#433c38" stroke-width="1" stroke-linejoin="round"/></svg>
<div class="htx" style="left:776px">Publisher</div>
<svg class="abs" style="left:851px;top:161px" width="14" height="14" viewBox="0 0 14 14"><path d="M1 1.2 L13 1.2 L8.6 5.6 L8.6 12.6 L5.4 10 L5.4 5.6 Z" fill="url(#fg)" stroke="#433c38" stroke-width="1" stroke-linejoin="round"/></svg>
<div class="htx" style="left:876px">Edition</div>
<svg class="abs" style="left:951px;top:161px" width="14" height="14" viewBox="0 0 14 14"><path d="M1 1.2 L13 1.2 L8.6 5.6 L8.6 12.6 L5.4 10 L5.4 5.6 Z" fill="url(#fg)" stroke="#433c38" stroke-width="1" stroke-linejoin="round"/></svg>
<div class="htx" style="left:976px">CR Year</div>
<svg class="abs" style="left:1026px;top:161px" width="14" height="14" viewBox="0 0 14 14"><path d="M1 1.2 L13 1.2 L8.6 5.6 L8.6 12.6 L5.4 10 L5.4 5.6 Z" fill="url(#fg)" stroke="#433c38" stroke-width="1" stroke-linejoin="round"/></svg>
<div class="htx" style="left:1051px">Status</div>
<svg class="abs" style="left:1126px;top:161px" width="14" height="14" viewBox="0 0 14 14"><path d="M1 1.2 L13 1.2 L8.6 5.6 L8.6 12.6 L5.4 10 L5.4 5.6 Z" fill="url(#fm)" stroke="#433c38" stroke-width="1" stroke-linejoin="round"/></svg>
<svg class="abs" style="left:63px;top:158px" width="6" height="4" viewBox="0 0 6 4"><path d="M0 4 L3 0.5 L6 4 Z" fill="#fff"/></svg>
<svg class="abs" style="left:1178px;top:643px" width="38" height="39" viewBox="0 0 38 39">
<path d="M0 0 H38 V24 H33 V5 H5 V34 H15 V39 H0 Z" fill="#c4000e"/></svg>
<svg class="abs" style="left:1194px;top:668px" width="22" height="25" viewBox="0 0 22 25">
<path d="M6 13.5 V3 A1.6 1.6 0 0 1 9.2 3 V10.5 V8.5 A1.6 1.6 0 0 1 12.4 8.5 V10.8 V9.4 A1.6 1.6 0 0 1 15.6 9.4 V11.6 A1.6 1.6 0 0 1 18.8 11.6 V17 C18.8 21 16.5 23.5 13 23.5 H11 C8.5 23.5 7.2 22.2 5.8 20.2 L2.2 15.2 A1.6 1.6 0 0 1 4.6 13.2 Z" fill="#fff" stroke="#1a1a2a" stroke-width="1.3" stroke-linejoin="round"/>
<path d="M9.2 10.5 V15 M12.4 10.8 V15 M15.6 11.6 V15" stroke="#1a1a2a" stroke-width="1"/>
</svg>
</body></html>
